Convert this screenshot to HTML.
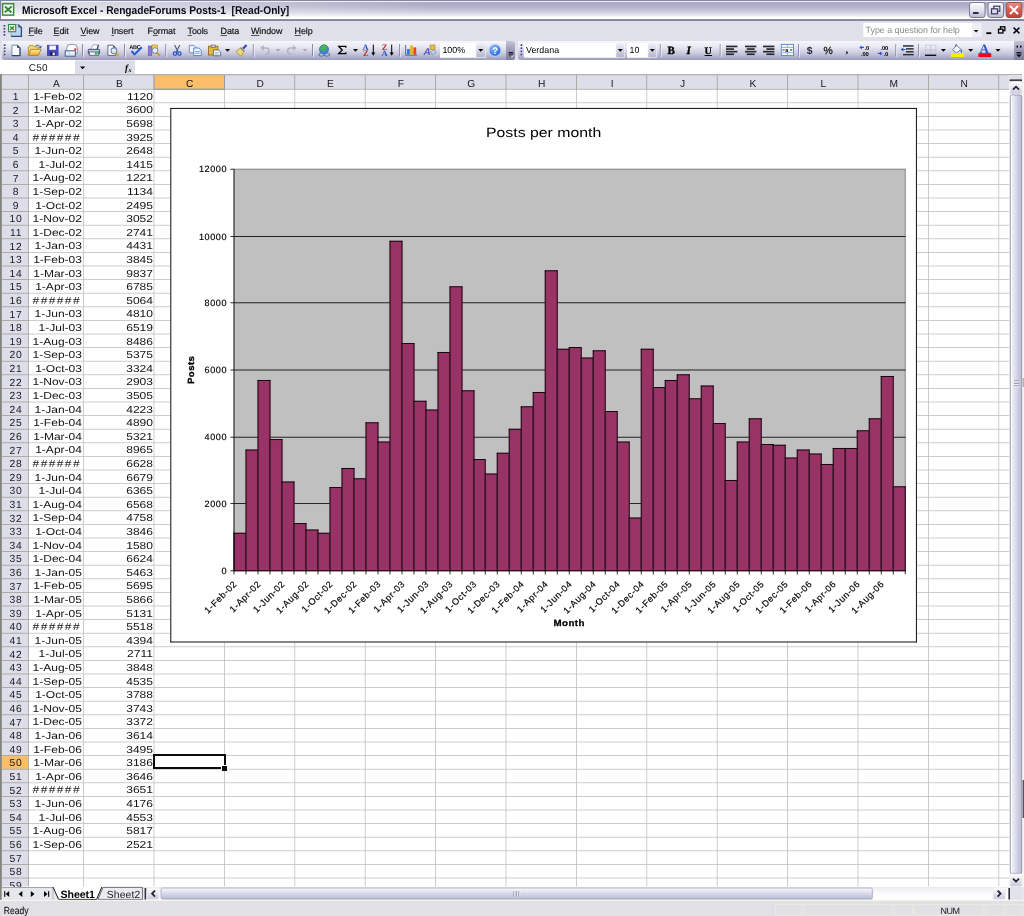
<!DOCTYPE html><html><head><meta charset="utf-8"><title>Microsoft Excel - RengadeForums Posts-1</title><style>
*{box-sizing:border-box;margin:0;padding:0}
html,body{width:1024px;height:916px;overflow:hidden;background:#fff}
body{position:relative;text-rendering:geometricPrecision;font-family:"Liberation Sans",sans-serif;font-size:9px;color:#000}
.abs{position:absolute}
#title{left:0;top:0;width:1024px;height:21px;background:linear-gradient(to bottom,#8686a4 0,#8686a4 3%,#f0f0f7 5.5%,#f0f0f7 8.5%,#a8a8c2 11%,#b0b0c9 30%,#c8c8da 52%,#e6e6ee 72%,#ffffff 83%,#ffffff 89%,#8a8aa8 93%,#8484a2 98%,#c8c8d8 100%)}
#titleshade{left:0;top:2px;width:440px;height:16px;background:linear-gradient(to right,rgba(255,255,255,.62) 0,rgba(255,255,255,.5) 30%,rgba(255,255,255,0) 100%)}
#titletxt{left:22px;top:5.4px;font-weight:bold;font-size:11.2px;letter-spacing:-.02px;transform:scaleX(.912);transform-origin:left center;white-space:nowrap;color:#0a0a14}
#menu{left:0;top:21px;width:1024px;height:19px;background:#e0e0ea}
.mi{top:25.6px;font-size:8.95px;white-space:nowrap;letter-spacing:-.08px;color:#0c0c0c;-webkit-text-stroke:.15px #0c0c0c}
.mi u{text-decoration-thickness:.7px;text-underline-offset:1px;text-decoration-color:#555}
#tb{left:0;top:40px;width:1024px;height:20.4px;background:#e0e0ea}
.tbg{top:40.6px;height:19.8px;border-radius:0 0 3px 3px;background:linear-gradient(to bottom,#f6f6fb 0,#e9e9f3 30%,#ccccdf 62%,#b0b0cb 85%,#9a9aba 100%)}
#fbar{left:0;top:60px;width:1024px;height:15px;background:#fff}
#grid{left:0;top:75px;width:1024px;height:812px}
.ch{top:77.7px;height:13px;font-size:10.2px;text-align:center;line-height:13.2px;color:#1a1a1a}
.rh{left:2px;width:26.6px;font-size:10.3px;text-align:center;letter-spacing:.8px;color:#1a1a1a;padding-top:1.35px;padding-left:1.5px}
.c{color:#141414;font-size:10.1px;letter-spacing:0;transform:scaleX(1.192);transform-origin:right center;text-align:right;white-space:nowrap;line-height:13.6px;height:13.6px}
</style></head><body><div id="w" class="abs" style="left:0;top:0;width:1024px;height:916px;will-change:transform">
<div id="title" class="abs"></div><div id="titleshade" class="abs"></div>
<div id="titletxt" class="abs">Microsoft Excel - RengadeForums Posts-1&nbsp; [Read-Only]</div>
<div id="menu" class="abs"></div>
<div class="abs mi" style="left:28.5px"><u>F</u>ile</div>
<div class="abs mi" style="left:53.5px"><u>E</u>dit</div>
<div class="abs mi" style="left:80.5px"><u>V</u>iew</div>
<div class="abs mi" style="left:111.5px"><u>I</u>nsert</div>
<div class="abs mi" style="left:147.5px">F<u>o</u>rmat</div>
<div class="abs mi" style="left:187.5px"><u>T</u>ools</div>
<div class="abs mi" style="left:220.5px"><u>D</u>ata</div>
<div class="abs mi" style="left:251px"><u>W</u>indow</div>
<div class="abs mi" style="left:294.5px"><u>H</u>elp</div>
<div id="tb" class="abs"></div>
<div class="abs tbg" style="left:2px;width:513px"></div>
<div class="abs tbg" style="left:518px;width:505px"></div>
<div id="fbar" class="abs"></div>
<svg class="abs" style="left:0;top:0" width="1024" height="916">
<rect x="28.8" y="102.40" width="980.20" height="0.80" fill="#c0c0c0"/>
<rect x="28.8" y="116.00" width="980.20" height="0.80" fill="#c0c0c0"/>
<rect x="28.8" y="129.60" width="980.20" height="0.80" fill="#c0c0c0"/>
<rect x="28.8" y="143.20" width="980.20" height="0.80" fill="#c0c0c0"/>
<rect x="28.8" y="156.80" width="980.20" height="0.80" fill="#c0c0c0"/>
<rect x="28.8" y="170.40" width="980.20" height="0.80" fill="#c0c0c0"/>
<rect x="28.8" y="184.00" width="980.20" height="0.80" fill="#c0c0c0"/>
<rect x="28.8" y="197.60" width="980.20" height="0.80" fill="#c0c0c0"/>
<rect x="28.8" y="211.20" width="980.20" height="0.80" fill="#c0c0c0"/>
<rect x="28.8" y="224.80" width="980.20" height="0.80" fill="#c0c0c0"/>
<rect x="28.8" y="238.40" width="980.20" height="0.80" fill="#c0c0c0"/>
<rect x="28.8" y="252.00" width="980.20" height="0.80" fill="#c0c0c0"/>
<rect x="28.8" y="265.60" width="980.20" height="0.80" fill="#c0c0c0"/>
<rect x="28.8" y="279.20" width="980.20" height="0.80" fill="#c0c0c0"/>
<rect x="28.8" y="292.80" width="980.20" height="0.80" fill="#c0c0c0"/>
<rect x="28.8" y="306.40" width="980.20" height="0.80" fill="#c0c0c0"/>
<rect x="28.8" y="320.00" width="980.20" height="0.80" fill="#c0c0c0"/>
<rect x="28.8" y="333.60" width="980.20" height="0.80" fill="#c0c0c0"/>
<rect x="28.8" y="347.20" width="980.20" height="0.80" fill="#c0c0c0"/>
<rect x="28.8" y="360.80" width="980.20" height="0.80" fill="#c0c0c0"/>
<rect x="28.8" y="374.40" width="980.20" height="0.80" fill="#c0c0c0"/>
<rect x="28.8" y="388.00" width="980.20" height="0.80" fill="#c0c0c0"/>
<rect x="28.8" y="401.60" width="980.20" height="0.80" fill="#c0c0c0"/>
<rect x="28.8" y="415.20" width="980.20" height="0.80" fill="#c0c0c0"/>
<rect x="28.8" y="428.80" width="980.20" height="0.80" fill="#c0c0c0"/>
<rect x="28.8" y="442.40" width="980.20" height="0.80" fill="#c0c0c0"/>
<rect x="28.8" y="456.00" width="980.20" height="0.80" fill="#c0c0c0"/>
<rect x="28.8" y="469.60" width="980.20" height="0.80" fill="#c0c0c0"/>
<rect x="28.8" y="483.20" width="980.20" height="0.80" fill="#c0c0c0"/>
<rect x="28.8" y="496.80" width="980.20" height="0.80" fill="#c0c0c0"/>
<rect x="28.8" y="510.40" width="980.20" height="0.80" fill="#c0c0c0"/>
<rect x="28.8" y="524.00" width="980.20" height="0.80" fill="#c0c0c0"/>
<rect x="28.8" y="537.60" width="980.20" height="0.80" fill="#c0c0c0"/>
<rect x="28.8" y="551.20" width="980.20" height="0.80" fill="#c0c0c0"/>
<rect x="28.8" y="564.80" width="980.20" height="0.80" fill="#c0c0c0"/>
<rect x="28.8" y="578.40" width="980.20" height="0.80" fill="#c0c0c0"/>
<rect x="28.8" y="592.00" width="980.20" height="0.80" fill="#c0c0c0"/>
<rect x="28.8" y="605.60" width="980.20" height="0.80" fill="#c0c0c0"/>
<rect x="28.8" y="619.20" width="980.20" height="0.80" fill="#c0c0c0"/>
<rect x="28.8" y="632.80" width="980.20" height="0.80" fill="#c0c0c0"/>
<rect x="28.8" y="646.40" width="980.20" height="0.80" fill="#c0c0c0"/>
<rect x="28.8" y="660.00" width="980.20" height="0.80" fill="#c0c0c0"/>
<rect x="28.8" y="673.60" width="980.20" height="0.80" fill="#c0c0c0"/>
<rect x="28.8" y="687.20" width="980.20" height="0.80" fill="#c0c0c0"/>
<rect x="28.8" y="700.80" width="980.20" height="0.80" fill="#c0c0c0"/>
<rect x="28.8" y="714.40" width="980.20" height="0.80" fill="#c0c0c0"/>
<rect x="28.8" y="728.00" width="980.20" height="0.80" fill="#c0c0c0"/>
<rect x="28.8" y="741.60" width="980.20" height="0.80" fill="#c0c0c0"/>
<rect x="28.8" y="755.20" width="980.20" height="0.80" fill="#c0c0c0"/>
<rect x="28.8" y="768.80" width="980.20" height="0.80" fill="#c0c0c0"/>
<rect x="28.8" y="782.40" width="980.20" height="0.80" fill="#c0c0c0"/>
<rect x="28.8" y="796.00" width="980.20" height="0.80" fill="#c0c0c0"/>
<rect x="28.8" y="809.60" width="980.20" height="0.80" fill="#c0c0c0"/>
<rect x="28.8" y="823.20" width="980.20" height="0.80" fill="#c0c0c0"/>
<rect x="28.8" y="836.80" width="980.20" height="0.80" fill="#c0c0c0"/>
<rect x="28.8" y="850.40" width="980.20" height="0.80" fill="#c0c0c0"/>
<rect x="28.8" y="864.00" width="980.20" height="0.80" fill="#c0c0c0"/>
<rect x="28.8" y="877.60" width="980.20" height="0.80" fill="#c0c0c0"/>
<rect x="83.20" y="89.6" width="0.80" height="796.90" fill="#c0c0c0"/>
<rect x="153.60" y="89.6" width="0.80" height="796.90" fill="#c0c0c0"/>
<rect x="224.00" y="89.6" width="0.80" height="796.90" fill="#c0c0c0"/>
<rect x="294.40" y="89.6" width="0.80" height="796.90" fill="#c0c0c0"/>
<rect x="364.80" y="89.6" width="0.80" height="796.90" fill="#c0c0c0"/>
<rect x="435.20" y="89.6" width="0.80" height="796.90" fill="#c0c0c0"/>
<rect x="505.60" y="89.6" width="0.80" height="796.90" fill="#c0c0c0"/>
<rect x="576.00" y="89.6" width="0.80" height="796.90" fill="#c0c0c0"/>
<rect x="646.40" y="89.6" width="0.80" height="796.90" fill="#c0c0c0"/>
<rect x="716.80" y="89.6" width="0.80" height="796.90" fill="#c0c0c0"/>
<rect x="787.20" y="89.6" width="0.80" height="796.90" fill="#c0c0c0"/>
<rect x="857.60" y="89.6" width="0.80" height="796.90" fill="#c0c0c0"/>
<rect x="928.00" y="89.6" width="0.80" height="796.90" fill="#c0c0c0"/>
<rect x="998.40" y="89.6" width="0.80" height="796.90" fill="#c0c0c0"/>
<rect x="0" y="74.4" width="1.7" height="813" fill="#84847e"/>
<rect x="1.7" y="75.2" width="1007.30" height="13.6" fill="#dedeeb"/>
<rect x="1.7" y="88.8" width="26.3" height="797.70" fill="#dedeeb"/>
<rect x="154.40" y="75.2" width="69.60" height="13.6" fill="#fabd68"/>
<rect x="1.7" y="756.00" width="26.3" height="12.80" fill="#fabd68"/>
<rect x="0" y="74.40" width="1022.00" height="0.80" fill="#84847e"/>
<rect x="1.7" y="88.80" width="1007.30" height="0.80" fill="#a09f90"/>
<rect x="153.60" y="88.80" width="71.20" height="0.80" fill="#7884b4"/>
<rect x="28.00" y="75.2" width="0.80" height="14.4" fill="#a09f90"/>
<rect x="83.20" y="75.2" width="0.80" height="14.4" fill="#a09f90"/>
<rect x="153.60" y="75.2" width="0.80" height="14.4" fill="#a09f90"/>
<rect x="224.00" y="75.2" width="0.80" height="14.4" fill="#a09f90"/>
<rect x="294.40" y="75.2" width="0.80" height="14.4" fill="#a09f90"/>
<rect x="364.80" y="75.2" width="0.80" height="14.4" fill="#a09f90"/>
<rect x="435.20" y="75.2" width="0.80" height="14.4" fill="#a09f90"/>
<rect x="505.60" y="75.2" width="0.80" height="14.4" fill="#a09f90"/>
<rect x="576.00" y="75.2" width="0.80" height="14.4" fill="#a09f90"/>
<rect x="646.40" y="75.2" width="0.80" height="14.4" fill="#a09f90"/>
<rect x="716.80" y="75.2" width="0.80" height="14.4" fill="#a09f90"/>
<rect x="787.20" y="75.2" width="0.80" height="14.4" fill="#a09f90"/>
<rect x="857.60" y="75.2" width="0.80" height="14.4" fill="#a09f90"/>
<rect x="928.00" y="75.2" width="0.80" height="14.4" fill="#a09f90"/>
<rect x="998.40" y="75.2" width="0.80" height="14.4" fill="#a09f90"/>
<rect x="153.60" y="75.2" width="0.80" height="13.6" fill="#7884b4" opacity=".55"/>
<rect x="224.00" y="75.2" width="0.80" height="13.6" fill="#7884b4" opacity=".55"/>
<rect x="28.00" y="89" width="0.80" height="797.50" fill="#a09f90"/>
<rect x="1.7" y="102.40" width="27" height="0.80" fill="#a09f90"/>
<rect x="1.7" y="116.00" width="27" height="0.80" fill="#a09f90"/>
<rect x="1.7" y="129.60" width="27" height="0.80" fill="#a09f90"/>
<rect x="1.7" y="143.20" width="27" height="0.80" fill="#a09f90"/>
<rect x="1.7" y="156.80" width="27" height="0.80" fill="#a09f90"/>
<rect x="1.7" y="170.40" width="27" height="0.80" fill="#a09f90"/>
<rect x="1.7" y="184.00" width="27" height="0.80" fill="#a09f90"/>
<rect x="1.7" y="197.60" width="27" height="0.80" fill="#a09f90"/>
<rect x="1.7" y="211.20" width="27" height="0.80" fill="#a09f90"/>
<rect x="1.7" y="224.80" width="27" height="0.80" fill="#a09f90"/>
<rect x="1.7" y="238.40" width="27" height="0.80" fill="#a09f90"/>
<rect x="1.7" y="252.00" width="27" height="0.80" fill="#a09f90"/>
<rect x="1.7" y="265.60" width="27" height="0.80" fill="#a09f90"/>
<rect x="1.7" y="279.20" width="27" height="0.80" fill="#a09f90"/>
<rect x="1.7" y="292.80" width="27" height="0.80" fill="#a09f90"/>
<rect x="1.7" y="306.40" width="27" height="0.80" fill="#a09f90"/>
<rect x="1.7" y="320.00" width="27" height="0.80" fill="#a09f90"/>
<rect x="1.7" y="333.60" width="27" height="0.80" fill="#a09f90"/>
<rect x="1.7" y="347.20" width="27" height="0.80" fill="#a09f90"/>
<rect x="1.7" y="360.80" width="27" height="0.80" fill="#a09f90"/>
<rect x="1.7" y="374.40" width="27" height="0.80" fill="#a09f90"/>
<rect x="1.7" y="388.00" width="27" height="0.80" fill="#a09f90"/>
<rect x="1.7" y="401.60" width="27" height="0.80" fill="#a09f90"/>
<rect x="1.7" y="415.20" width="27" height="0.80" fill="#a09f90"/>
<rect x="1.7" y="428.80" width="27" height="0.80" fill="#a09f90"/>
<rect x="1.7" y="442.40" width="27" height="0.80" fill="#a09f90"/>
<rect x="1.7" y="456.00" width="27" height="0.80" fill="#a09f90"/>
<rect x="1.7" y="469.60" width="27" height="0.80" fill="#a09f90"/>
<rect x="1.7" y="483.20" width="27" height="0.80" fill="#a09f90"/>
<rect x="1.7" y="496.80" width="27" height="0.80" fill="#a09f90"/>
<rect x="1.7" y="510.40" width="27" height="0.80" fill="#a09f90"/>
<rect x="1.7" y="524.00" width="27" height="0.80" fill="#a09f90"/>
<rect x="1.7" y="537.60" width="27" height="0.80" fill="#a09f90"/>
<rect x="1.7" y="551.20" width="27" height="0.80" fill="#a09f90"/>
<rect x="1.7" y="564.80" width="27" height="0.80" fill="#a09f90"/>
<rect x="1.7" y="578.40" width="27" height="0.80" fill="#a09f90"/>
<rect x="1.7" y="592.00" width="27" height="0.80" fill="#a09f90"/>
<rect x="1.7" y="605.60" width="27" height="0.80" fill="#a09f90"/>
<rect x="1.7" y="619.20" width="27" height="0.80" fill="#a09f90"/>
<rect x="1.7" y="632.80" width="27" height="0.80" fill="#a09f90"/>
<rect x="1.7" y="646.40" width="27" height="0.80" fill="#a09f90"/>
<rect x="1.7" y="660.00" width="27" height="0.80" fill="#a09f90"/>
<rect x="1.7" y="673.60" width="27" height="0.80" fill="#a09f90"/>
<rect x="1.7" y="687.20" width="27" height="0.80" fill="#a09f90"/>
<rect x="1.7" y="700.80" width="27" height="0.80" fill="#a09f90"/>
<rect x="1.7" y="714.40" width="27" height="0.80" fill="#a09f90"/>
<rect x="1.7" y="728.00" width="27" height="0.80" fill="#a09f90"/>
<rect x="1.7" y="741.60" width="27" height="0.80" fill="#a09f90"/>
<rect x="1.7" y="755.20" width="27" height="0.80" fill="#a09f90"/>
<rect x="1.7" y="768.80" width="27" height="0.80" fill="#a09f90"/>
<rect x="1.7" y="782.40" width="27" height="0.80" fill="#a09f90"/>
<rect x="1.7" y="796.00" width="27" height="0.80" fill="#a09f90"/>
<rect x="1.7" y="809.60" width="27" height="0.80" fill="#a09f90"/>
<rect x="1.7" y="823.20" width="27" height="0.80" fill="#a09f90"/>
<rect x="1.7" y="836.80" width="27" height="0.80" fill="#a09f90"/>
<rect x="1.7" y="850.40" width="27" height="0.80" fill="#a09f90"/>
<rect x="1.7" y="864.00" width="27" height="0.80" fill="#a09f90"/>
<rect x="1.7" y="877.60" width="27" height="0.80" fill="#a09f90"/>
</svg>
<div class="abs ch" style="left:28.90px;width:55.20px">A</div>
<div class="abs ch" style="left:84.10px;width:70.40px">B</div>
<div class="abs ch" style="left:154.50px;width:70.40px">C</div>
<div class="abs ch" style="left:224.90px;width:70.40px">D</div>
<div class="abs ch" style="left:295.30px;width:70.40px">E</div>
<div class="abs ch" style="left:365.70px;width:70.40px">F</div>
<div class="abs ch" style="left:436.10px;width:70.40px">G</div>
<div class="abs ch" style="left:506.50px;width:70.40px">H</div>
<div class="abs ch" style="left:576.90px;width:70.40px">I</div>
<div class="abs ch" style="left:647.30px;width:70.40px">J</div>
<div class="abs ch" style="left:717.70px;width:70.40px">K</div>
<div class="abs ch" style="left:788.10px;width:70.40px">L</div>
<div class="abs ch" style="left:858.50px;width:70.40px">M</div>
<div class="abs ch" style="left:928.90px;width:70.40px">N</div>
<div class="abs rh" style="top:89.70px;height:13.60px;line-height:13.60px;overflow:hidden">1</div>
<div class="abs rh" style="top:103.30px;height:13.60px;line-height:13.60px;overflow:hidden">2</div>
<div class="abs rh" style="top:116.90px;height:13.60px;line-height:13.60px;overflow:hidden">3</div>
<div class="abs rh" style="top:130.50px;height:13.60px;line-height:13.60px;overflow:hidden">4</div>
<div class="abs rh" style="top:144.10px;height:13.60px;line-height:13.60px;overflow:hidden">5</div>
<div class="abs rh" style="top:157.70px;height:13.60px;line-height:13.60px;overflow:hidden">6</div>
<div class="abs rh" style="top:171.30px;height:13.60px;line-height:13.60px;overflow:hidden">7</div>
<div class="abs rh" style="top:184.90px;height:13.60px;line-height:13.60px;overflow:hidden">8</div>
<div class="abs rh" style="top:198.50px;height:13.60px;line-height:13.60px;overflow:hidden">9</div>
<div class="abs rh" style="top:212.10px;height:13.60px;line-height:13.60px;overflow:hidden">10</div>
<div class="abs rh" style="top:225.70px;height:13.60px;line-height:13.60px;overflow:hidden">11</div>
<div class="abs rh" style="top:239.30px;height:13.60px;line-height:13.60px;overflow:hidden">12</div>
<div class="abs rh" style="top:252.90px;height:13.60px;line-height:13.60px;overflow:hidden">13</div>
<div class="abs rh" style="top:266.50px;height:13.60px;line-height:13.60px;overflow:hidden">14</div>
<div class="abs rh" style="top:280.10px;height:13.60px;line-height:13.60px;overflow:hidden">15</div>
<div class="abs rh" style="top:293.70px;height:13.60px;line-height:13.60px;overflow:hidden">16</div>
<div class="abs rh" style="top:307.30px;height:13.60px;line-height:13.60px;overflow:hidden">17</div>
<div class="abs rh" style="top:320.90px;height:13.60px;line-height:13.60px;overflow:hidden">18</div>
<div class="abs rh" style="top:334.50px;height:13.60px;line-height:13.60px;overflow:hidden">19</div>
<div class="abs rh" style="top:348.10px;height:13.60px;line-height:13.60px;overflow:hidden">20</div>
<div class="abs rh" style="top:361.70px;height:13.60px;line-height:13.60px;overflow:hidden">21</div>
<div class="abs rh" style="top:375.30px;height:13.60px;line-height:13.60px;overflow:hidden">22</div>
<div class="abs rh" style="top:388.90px;height:13.60px;line-height:13.60px;overflow:hidden">23</div>
<div class="abs rh" style="top:402.50px;height:13.60px;line-height:13.60px;overflow:hidden">24</div>
<div class="abs rh" style="top:416.10px;height:13.60px;line-height:13.60px;overflow:hidden">25</div>
<div class="abs rh" style="top:429.70px;height:13.60px;line-height:13.60px;overflow:hidden">26</div>
<div class="abs rh" style="top:443.30px;height:13.60px;line-height:13.60px;overflow:hidden">27</div>
<div class="abs rh" style="top:456.90px;height:13.60px;line-height:13.60px;overflow:hidden">28</div>
<div class="abs rh" style="top:470.50px;height:13.60px;line-height:13.60px;overflow:hidden">29</div>
<div class="abs rh" style="top:484.10px;height:13.60px;line-height:13.60px;overflow:hidden">30</div>
<div class="abs rh" style="top:497.70px;height:13.60px;line-height:13.60px;overflow:hidden">31</div>
<div class="abs rh" style="top:511.30px;height:13.60px;line-height:13.60px;overflow:hidden">32</div>
<div class="abs rh" style="top:524.90px;height:13.60px;line-height:13.60px;overflow:hidden">33</div>
<div class="abs rh" style="top:538.50px;height:13.60px;line-height:13.60px;overflow:hidden">34</div>
<div class="abs rh" style="top:552.10px;height:13.60px;line-height:13.60px;overflow:hidden">35</div>
<div class="abs rh" style="top:565.70px;height:13.60px;line-height:13.60px;overflow:hidden">36</div>
<div class="abs rh" style="top:579.30px;height:13.60px;line-height:13.60px;overflow:hidden">37</div>
<div class="abs rh" style="top:592.90px;height:13.60px;line-height:13.60px;overflow:hidden">38</div>
<div class="abs rh" style="top:606.50px;height:13.60px;line-height:13.60px;overflow:hidden">39</div>
<div class="abs rh" style="top:620.10px;height:13.60px;line-height:13.60px;overflow:hidden">40</div>
<div class="abs rh" style="top:633.70px;height:13.60px;line-height:13.60px;overflow:hidden">41</div>
<div class="abs rh" style="top:647.30px;height:13.60px;line-height:13.60px;overflow:hidden">42</div>
<div class="abs rh" style="top:660.90px;height:13.60px;line-height:13.60px;overflow:hidden">43</div>
<div class="abs rh" style="top:674.50px;height:13.60px;line-height:13.60px;overflow:hidden">44</div>
<div class="abs rh" style="top:688.10px;height:13.60px;line-height:13.60px;overflow:hidden">45</div>
<div class="abs rh" style="top:701.70px;height:13.60px;line-height:13.60px;overflow:hidden">46</div>
<div class="abs rh" style="top:715.30px;height:13.60px;line-height:13.60px;overflow:hidden">47</div>
<div class="abs rh" style="top:728.90px;height:13.60px;line-height:13.60px;overflow:hidden">48</div>
<div class="abs rh" style="top:742.50px;height:13.60px;line-height:13.60px;overflow:hidden">49</div>
<div class="abs rh" style="top:756.10px;height:13.60px;line-height:13.60px;overflow:hidden">50</div>
<div class="abs rh" style="top:769.70px;height:13.60px;line-height:13.60px;overflow:hidden">51</div>
<div class="abs rh" style="top:783.30px;height:13.60px;line-height:13.60px;overflow:hidden">52</div>
<div class="abs rh" style="top:796.90px;height:13.60px;line-height:13.60px;overflow:hidden">53</div>
<div class="abs rh" style="top:810.50px;height:13.60px;line-height:13.60px;overflow:hidden">54</div>
<div class="abs rh" style="top:824.10px;height:13.60px;line-height:13.60px;overflow:hidden">55</div>
<div class="abs rh" style="top:837.70px;height:13.60px;line-height:13.60px;overflow:hidden">56</div>
<div class="abs rh" style="top:851.30px;height:13.60px;line-height:13.60px;overflow:hidden">57</div>
<div class="abs rh" style="top:864.90px;height:13.60px;line-height:13.60px;overflow:hidden">58</div>
<div class="abs rh" style="top:878.50px;height:8.60px;line-height:13.60px;overflow:hidden">59</div>
<div class="abs c" style="left:27.8px;top:90.80px;width:54px">1-Feb-02</div>
<div class="abs c" style="left:90px;top:90.80px;width:63px">1120</div>
<div class="abs c" style="left:27.8px;top:104.40px;width:54px">1-Mar-02</div>
<div class="abs c" style="left:90px;top:104.40px;width:63px">3600</div>
<div class="abs c" style="left:27.8px;top:118.00px;width:54px">1-Apr-02</div>
<div class="abs c" style="left:90px;top:118.00px;width:63px">5698</div>
<div class="abs c" style="left:30px;top:131.60px;width:54px;text-align:left;letter-spacing:1.15px;transform-origin:left center;padding-left:2.2px">######</div>
<div class="abs c" style="left:90px;top:131.60px;width:63px">3925</div>
<div class="abs c" style="left:27.8px;top:145.20px;width:54px">1-Jun-02</div>
<div class="abs c" style="left:90px;top:145.20px;width:63px">2648</div>
<div class="abs c" style="left:27.8px;top:158.80px;width:54px">1-Jul-02</div>
<div class="abs c" style="left:90px;top:158.80px;width:63px">1415</div>
<div class="abs c" style="left:27.8px;top:172.40px;width:54px">1-Aug-02</div>
<div class="abs c" style="left:90px;top:172.40px;width:63px">1221</div>
<div class="abs c" style="left:27.8px;top:186.00px;width:54px">1-Sep-02</div>
<div class="abs c" style="left:90px;top:186.00px;width:63px">1134</div>
<div class="abs c" style="left:27.8px;top:199.60px;width:54px">1-Oct-02</div>
<div class="abs c" style="left:90px;top:199.60px;width:63px">2495</div>
<div class="abs c" style="left:27.8px;top:213.20px;width:54px">1-Nov-02</div>
<div class="abs c" style="left:90px;top:213.20px;width:63px">3052</div>
<div class="abs c" style="left:27.8px;top:226.80px;width:54px">1-Dec-02</div>
<div class="abs c" style="left:90px;top:226.80px;width:63px">2741</div>
<div class="abs c" style="left:27.8px;top:240.40px;width:54px">1-Jan-03</div>
<div class="abs c" style="left:90px;top:240.40px;width:63px">4431</div>
<div class="abs c" style="left:27.8px;top:254.00px;width:54px">1-Feb-03</div>
<div class="abs c" style="left:90px;top:254.00px;width:63px">3845</div>
<div class="abs c" style="left:27.8px;top:267.60px;width:54px">1-Mar-03</div>
<div class="abs c" style="left:90px;top:267.60px;width:63px">9837</div>
<div class="abs c" style="left:27.8px;top:281.20px;width:54px">1-Apr-03</div>
<div class="abs c" style="left:90px;top:281.20px;width:63px">6785</div>
<div class="abs c" style="left:30px;top:294.80px;width:54px;text-align:left;letter-spacing:1.15px;transform-origin:left center;padding-left:2.2px">######</div>
<div class="abs c" style="left:90px;top:294.80px;width:63px">5064</div>
<div class="abs c" style="left:27.8px;top:308.40px;width:54px">1-Jun-03</div>
<div class="abs c" style="left:90px;top:308.40px;width:63px">4810</div>
<div class="abs c" style="left:27.8px;top:322.00px;width:54px">1-Jul-03</div>
<div class="abs c" style="left:90px;top:322.00px;width:63px">6519</div>
<div class="abs c" style="left:27.8px;top:335.60px;width:54px">1-Aug-03</div>
<div class="abs c" style="left:90px;top:335.60px;width:63px">8486</div>
<div class="abs c" style="left:27.8px;top:349.20px;width:54px">1-Sep-03</div>
<div class="abs c" style="left:90px;top:349.20px;width:63px">5375</div>
<div class="abs c" style="left:27.8px;top:362.80px;width:54px">1-Oct-03</div>
<div class="abs c" style="left:90px;top:362.80px;width:63px">3324</div>
<div class="abs c" style="left:27.8px;top:376.40px;width:54px">1-Nov-03</div>
<div class="abs c" style="left:90px;top:376.40px;width:63px">2903</div>
<div class="abs c" style="left:27.8px;top:390.00px;width:54px">1-Dec-03</div>
<div class="abs c" style="left:90px;top:390.00px;width:63px">3505</div>
<div class="abs c" style="left:27.8px;top:403.60px;width:54px">1-Jan-04</div>
<div class="abs c" style="left:90px;top:403.60px;width:63px">4223</div>
<div class="abs c" style="left:27.8px;top:417.20px;width:54px">1-Feb-04</div>
<div class="abs c" style="left:90px;top:417.20px;width:63px">4890</div>
<div class="abs c" style="left:27.8px;top:430.80px;width:54px">1-Mar-04</div>
<div class="abs c" style="left:90px;top:430.80px;width:63px">5321</div>
<div class="abs c" style="left:27.8px;top:444.40px;width:54px">1-Apr-04</div>
<div class="abs c" style="left:90px;top:444.40px;width:63px">8965</div>
<div class="abs c" style="left:30px;top:458.00px;width:54px;text-align:left;letter-spacing:1.15px;transform-origin:left center;padding-left:2.2px">######</div>
<div class="abs c" style="left:90px;top:458.00px;width:63px">6628</div>
<div class="abs c" style="left:27.8px;top:471.60px;width:54px">1-Jun-04</div>
<div class="abs c" style="left:90px;top:471.60px;width:63px">6679</div>
<div class="abs c" style="left:27.8px;top:485.20px;width:54px">1-Jul-04</div>
<div class="abs c" style="left:90px;top:485.20px;width:63px">6365</div>
<div class="abs c" style="left:27.8px;top:498.80px;width:54px">1-Aug-04</div>
<div class="abs c" style="left:90px;top:498.80px;width:63px">6568</div>
<div class="abs c" style="left:27.8px;top:512.40px;width:54px">1-Sep-04</div>
<div class="abs c" style="left:90px;top:512.40px;width:63px">4758</div>
<div class="abs c" style="left:27.8px;top:526.00px;width:54px">1-Oct-04</div>
<div class="abs c" style="left:90px;top:526.00px;width:63px">3846</div>
<div class="abs c" style="left:27.8px;top:539.60px;width:54px">1-Nov-04</div>
<div class="abs c" style="left:90px;top:539.60px;width:63px">1580</div>
<div class="abs c" style="left:27.8px;top:553.20px;width:54px">1-Dec-04</div>
<div class="abs c" style="left:90px;top:553.20px;width:63px">6624</div>
<div class="abs c" style="left:27.8px;top:566.80px;width:54px">1-Jan-05</div>
<div class="abs c" style="left:90px;top:566.80px;width:63px">5463</div>
<div class="abs c" style="left:27.8px;top:580.40px;width:54px">1-Feb-05</div>
<div class="abs c" style="left:90px;top:580.40px;width:63px">5695</div>
<div class="abs c" style="left:27.8px;top:594.00px;width:54px">1-Mar-05</div>
<div class="abs c" style="left:90px;top:594.00px;width:63px">5866</div>
<div class="abs c" style="left:27.8px;top:607.60px;width:54px">1-Apr-05</div>
<div class="abs c" style="left:90px;top:607.60px;width:63px">5131</div>
<div class="abs c" style="left:30px;top:621.20px;width:54px;text-align:left;letter-spacing:1.15px;transform-origin:left center;padding-left:2.2px">######</div>
<div class="abs c" style="left:90px;top:621.20px;width:63px">5518</div>
<div class="abs c" style="left:27.8px;top:634.80px;width:54px">1-Jun-05</div>
<div class="abs c" style="left:90px;top:634.80px;width:63px">4394</div>
<div class="abs c" style="left:27.8px;top:648.40px;width:54px">1-Jul-05</div>
<div class="abs c" style="left:90px;top:648.40px;width:63px">2711</div>
<div class="abs c" style="left:27.8px;top:662.00px;width:54px">1-Aug-05</div>
<div class="abs c" style="left:90px;top:662.00px;width:63px">3848</div>
<div class="abs c" style="left:27.8px;top:675.60px;width:54px">1-Sep-05</div>
<div class="abs c" style="left:90px;top:675.60px;width:63px">4535</div>
<div class="abs c" style="left:27.8px;top:689.20px;width:54px">1-Oct-05</div>
<div class="abs c" style="left:90px;top:689.20px;width:63px">3788</div>
<div class="abs c" style="left:27.8px;top:702.80px;width:54px">1-Nov-05</div>
<div class="abs c" style="left:90px;top:702.80px;width:63px">3743</div>
<div class="abs c" style="left:27.8px;top:716.40px;width:54px">1-Dec-05</div>
<div class="abs c" style="left:90px;top:716.40px;width:63px">3372</div>
<div class="abs c" style="left:27.8px;top:730.00px;width:54px">1-Jan-06</div>
<div class="abs c" style="left:90px;top:730.00px;width:63px">3614</div>
<div class="abs c" style="left:27.8px;top:743.60px;width:54px">1-Feb-06</div>
<div class="abs c" style="left:90px;top:743.60px;width:63px">3495</div>
<div class="abs c" style="left:27.8px;top:757.20px;width:54px">1-Mar-06</div>
<div class="abs c" style="left:90px;top:757.20px;width:63px">3186</div>
<div class="abs c" style="left:27.8px;top:770.80px;width:54px">1-Apr-06</div>
<div class="abs c" style="left:90px;top:770.80px;width:63px">3646</div>
<div class="abs c" style="left:30px;top:784.40px;width:54px;text-align:left;letter-spacing:1.15px;transform-origin:left center;padding-left:2.2px">######</div>
<div class="abs c" style="left:90px;top:784.40px;width:63px">3651</div>
<div class="abs c" style="left:27.8px;top:798.00px;width:54px">1-Jun-06</div>
<div class="abs c" style="left:90px;top:798.00px;width:63px">4176</div>
<div class="abs c" style="left:27.8px;top:811.60px;width:54px">1-Jul-06</div>
<div class="abs c" style="left:90px;top:811.60px;width:63px">4553</div>
<div class="abs c" style="left:27.8px;top:825.20px;width:54px">1-Aug-06</div>
<div class="abs c" style="left:90px;top:825.20px;width:63px">5817</div>
<div class="abs c" style="left:27.8px;top:838.80px;width:54px">1-Sep-06</div>
<div class="abs c" style="left:90px;top:838.80px;width:63px">2521</div>
<div class="abs" style="left:152.9px;top:753.7px;width:73px;height:15.7px;border:2.2px solid #0a0a0a"></div>
<div class="abs" style="left:220.9px;top:765.4px;width:5.8px;height:5.4px;background:#0a0a0a;border-left:1px solid #fff;border-top:1px solid #fff"></div>
<svg class="abs" style="left:0;top:0" width="1024" height="916" font-family="Liberation Sans, sans-serif">
<rect x="170.40" y="108.00" width="746.40" height="534.40" fill="#fff"/>
<rect x="170.40" y="107.92" width="746.40" height="0.95" fill="#000"/>
<rect x="170.40" y="641.52" width="746.40" height="0.95" fill="#000"/>
<rect x="170.33" y="108.00" width="0.95" height="534.40" fill="#000"/>
<rect x="915.92" y="108.00" width="0.95" height="534.40" fill="#000"/>
<rect x="233.60" y="168.80" width="672.00" height="402.40" fill="#c0c0c0"/>
<rect x="233.60" y="168.77" width="672.00" height="0.86" fill="#808080"/>
<rect x="904.77" y="168.80" width="0.86" height="402.40" fill="#808080"/>
<rect x="233.60" y="503.19" width="672.00" height="0.82" fill="#000"/>
<rect x="233.60" y="436.79" width="672.00" height="0.82" fill="#000"/>
<rect x="233.60" y="369.59" width="672.00" height="0.82" fill="#000"/>
<rect x="233.60" y="302.39" width="672.00" height="0.82" fill="#000"/>
<rect x="233.60" y="235.99" width="672.00" height="0.82" fill="#000"/>
<rect x="233.60" y="532.80" width="12.80" height="38.40" fill="#993366"/>
<rect x="233.60" y="532.77" width="12.80" height="0.86" fill="#000"/>
<rect x="233.57" y="532.80" width="0.86" height="38.40" fill="#000"/>
<rect x="245.57" y="532.80" width="0.86" height="38.40" fill="#000"/>
<rect x="245.60" y="449.60" width="12.80" height="121.60" fill="#993366"/>
<rect x="245.60" y="449.57" width="12.80" height="0.86" fill="#000"/>
<rect x="245.57" y="449.60" width="0.86" height="121.60" fill="#000"/>
<rect x="257.57" y="449.60" width="0.86" height="121.60" fill="#000"/>
<rect x="257.60" y="380.00" width="12.80" height="191.20" fill="#993366"/>
<rect x="257.60" y="379.97" width="12.80" height="0.86" fill="#000"/>
<rect x="257.57" y="380.00" width="0.86" height="191.20" fill="#000"/>
<rect x="269.57" y="380.00" width="0.86" height="191.20" fill="#000"/>
<rect x="269.60" y="439.20" width="12.80" height="132.00" fill="#993366"/>
<rect x="269.60" y="439.17" width="12.80" height="0.86" fill="#000"/>
<rect x="269.57" y="439.20" width="0.86" height="132.00" fill="#000"/>
<rect x="281.57" y="439.20" width="0.86" height="132.00" fill="#000"/>
<rect x="281.60" y="481.60" width="12.80" height="89.60" fill="#993366"/>
<rect x="281.60" y="481.57" width="12.80" height="0.86" fill="#000"/>
<rect x="281.57" y="481.60" width="0.86" height="89.60" fill="#000"/>
<rect x="293.57" y="481.60" width="0.86" height="89.60" fill="#000"/>
<rect x="293.60" y="523.20" width="12.80" height="48.00" fill="#993366"/>
<rect x="293.60" y="523.17" width="12.80" height="0.86" fill="#000"/>
<rect x="293.57" y="523.20" width="0.86" height="48.00" fill="#000"/>
<rect x="305.57" y="523.20" width="0.86" height="48.00" fill="#000"/>
<rect x="305.60" y="529.60" width="12.80" height="41.60" fill="#993366"/>
<rect x="305.60" y="529.57" width="12.80" height="0.86" fill="#000"/>
<rect x="305.57" y="529.60" width="0.86" height="41.60" fill="#000"/>
<rect x="317.57" y="529.60" width="0.86" height="41.60" fill="#000"/>
<rect x="317.60" y="532.80" width="12.80" height="38.40" fill="#993366"/>
<rect x="317.60" y="532.77" width="12.80" height="0.86" fill="#000"/>
<rect x="317.57" y="532.80" width="0.86" height="38.40" fill="#000"/>
<rect x="329.57" y="532.80" width="0.86" height="38.40" fill="#000"/>
<rect x="329.60" y="487.20" width="12.80" height="84.00" fill="#993366"/>
<rect x="329.60" y="487.17" width="12.80" height="0.86" fill="#000"/>
<rect x="329.57" y="487.20" width="0.86" height="84.00" fill="#000"/>
<rect x="341.57" y="487.20" width="0.86" height="84.00" fill="#000"/>
<rect x="341.60" y="468.00" width="12.80" height="103.20" fill="#993366"/>
<rect x="341.60" y="467.97" width="12.80" height="0.86" fill="#000"/>
<rect x="341.57" y="468.00" width="0.86" height="103.20" fill="#000"/>
<rect x="353.57" y="468.00" width="0.86" height="103.20" fill="#000"/>
<rect x="353.60" y="478.40" width="12.80" height="92.80" fill="#993366"/>
<rect x="353.60" y="478.37" width="12.80" height="0.86" fill="#000"/>
<rect x="353.57" y="478.40" width="0.86" height="92.80" fill="#000"/>
<rect x="365.57" y="478.40" width="0.86" height="92.80" fill="#000"/>
<rect x="365.60" y="422.40" width="12.80" height="148.80" fill="#993366"/>
<rect x="365.60" y="422.37" width="12.80" height="0.86" fill="#000"/>
<rect x="365.57" y="422.40" width="0.86" height="148.80" fill="#000"/>
<rect x="377.57" y="422.40" width="0.86" height="148.80" fill="#000"/>
<rect x="377.60" y="441.60" width="12.80" height="129.60" fill="#993366"/>
<rect x="377.60" y="441.57" width="12.80" height="0.86" fill="#000"/>
<rect x="377.57" y="441.60" width="0.86" height="129.60" fill="#000"/>
<rect x="389.57" y="441.60" width="0.86" height="129.60" fill="#000"/>
<rect x="389.60" y="240.80" width="12.80" height="330.40" fill="#993366"/>
<rect x="389.60" y="240.77" width="12.80" height="0.86" fill="#000"/>
<rect x="389.57" y="240.80" width="0.86" height="330.40" fill="#000"/>
<rect x="401.57" y="240.80" width="0.86" height="330.40" fill="#000"/>
<rect x="401.60" y="343.20" width="12.80" height="228.00" fill="#993366"/>
<rect x="401.60" y="343.17" width="12.80" height="0.86" fill="#000"/>
<rect x="401.57" y="343.20" width="0.86" height="228.00" fill="#000"/>
<rect x="413.57" y="343.20" width="0.86" height="228.00" fill="#000"/>
<rect x="413.60" y="400.80" width="12.80" height="170.40" fill="#993366"/>
<rect x="413.60" y="400.77" width="12.80" height="0.86" fill="#000"/>
<rect x="413.57" y="400.80" width="0.86" height="170.40" fill="#000"/>
<rect x="425.57" y="400.80" width="0.86" height="170.40" fill="#000"/>
<rect x="425.60" y="409.60" width="12.80" height="161.60" fill="#993366"/>
<rect x="425.60" y="409.57" width="12.80" height="0.86" fill="#000"/>
<rect x="425.57" y="409.60" width="0.86" height="161.60" fill="#000"/>
<rect x="437.57" y="409.60" width="0.86" height="161.60" fill="#000"/>
<rect x="437.60" y="352.00" width="12.80" height="219.20" fill="#993366"/>
<rect x="437.60" y="351.97" width="12.80" height="0.86" fill="#000"/>
<rect x="437.57" y="352.00" width="0.86" height="219.20" fill="#000"/>
<rect x="449.57" y="352.00" width="0.86" height="219.20" fill="#000"/>
<rect x="449.60" y="286.40" width="12.80" height="284.80" fill="#993366"/>
<rect x="449.60" y="286.37" width="12.80" height="0.86" fill="#000"/>
<rect x="449.57" y="286.40" width="0.86" height="284.80" fill="#000"/>
<rect x="461.57" y="286.40" width="0.86" height="284.80" fill="#000"/>
<rect x="461.60" y="390.40" width="12.80" height="180.80" fill="#993366"/>
<rect x="461.60" y="390.37" width="12.80" height="0.86" fill="#000"/>
<rect x="461.57" y="390.40" width="0.86" height="180.80" fill="#000"/>
<rect x="473.57" y="390.40" width="0.86" height="180.80" fill="#000"/>
<rect x="473.60" y="459.20" width="12.00" height="112.00" fill="#993366"/>
<rect x="473.60" y="459.17" width="12.00" height="0.86" fill="#000"/>
<rect x="473.57" y="459.20" width="0.86" height="112.00" fill="#000"/>
<rect x="484.77" y="459.20" width="0.86" height="112.00" fill="#000"/>
<rect x="484.80" y="473.60" width="12.80" height="97.60" fill="#993366"/>
<rect x="484.80" y="473.57" width="12.80" height="0.86" fill="#000"/>
<rect x="484.77" y="473.60" width="0.86" height="97.60" fill="#000"/>
<rect x="496.77" y="473.60" width="0.86" height="97.60" fill="#000"/>
<rect x="496.80" y="452.80" width="12.80" height="118.40" fill="#993366"/>
<rect x="496.80" y="452.77" width="12.80" height="0.86" fill="#000"/>
<rect x="496.77" y="452.80" width="0.86" height="118.40" fill="#000"/>
<rect x="508.77" y="452.80" width="0.86" height="118.40" fill="#000"/>
<rect x="508.80" y="428.80" width="12.80" height="142.40" fill="#993366"/>
<rect x="508.80" y="428.77" width="12.80" height="0.86" fill="#000"/>
<rect x="508.77" y="428.80" width="0.86" height="142.40" fill="#000"/>
<rect x="520.77" y="428.80" width="0.86" height="142.40" fill="#000"/>
<rect x="520.80" y="406.40" width="12.80" height="164.80" fill="#993366"/>
<rect x="520.80" y="406.37" width="12.80" height="0.86" fill="#000"/>
<rect x="520.77" y="406.40" width="0.86" height="164.80" fill="#000"/>
<rect x="532.77" y="406.40" width="0.86" height="164.80" fill="#000"/>
<rect x="532.80" y="392.00" width="12.80" height="179.20" fill="#993366"/>
<rect x="532.80" y="391.97" width="12.80" height="0.86" fill="#000"/>
<rect x="532.77" y="392.00" width="0.86" height="179.20" fill="#000"/>
<rect x="544.77" y="392.00" width="0.86" height="179.20" fill="#000"/>
<rect x="544.80" y="270.40" width="12.80" height="300.80" fill="#993366"/>
<rect x="544.80" y="270.37" width="12.80" height="0.86" fill="#000"/>
<rect x="544.77" y="270.40" width="0.86" height="300.80" fill="#000"/>
<rect x="556.77" y="270.40" width="0.86" height="300.80" fill="#000"/>
<rect x="556.80" y="348.80" width="12.80" height="222.40" fill="#993366"/>
<rect x="556.80" y="348.77" width="12.80" height="0.86" fill="#000"/>
<rect x="556.77" y="348.80" width="0.86" height="222.40" fill="#000"/>
<rect x="568.77" y="348.80" width="0.86" height="222.40" fill="#000"/>
<rect x="568.80" y="347.20" width="12.80" height="224.00" fill="#993366"/>
<rect x="568.80" y="347.17" width="12.80" height="0.86" fill="#000"/>
<rect x="568.77" y="347.20" width="0.86" height="224.00" fill="#000"/>
<rect x="580.77" y="347.20" width="0.86" height="224.00" fill="#000"/>
<rect x="580.80" y="357.60" width="12.80" height="213.60" fill="#993366"/>
<rect x="580.80" y="357.57" width="12.80" height="0.86" fill="#000"/>
<rect x="580.77" y="357.60" width="0.86" height="213.60" fill="#000"/>
<rect x="592.77" y="357.60" width="0.86" height="213.60" fill="#000"/>
<rect x="592.80" y="350.40" width="12.80" height="220.80" fill="#993366"/>
<rect x="592.80" y="350.37" width="12.80" height="0.86" fill="#000"/>
<rect x="592.77" y="350.40" width="0.86" height="220.80" fill="#000"/>
<rect x="604.77" y="350.40" width="0.86" height="220.80" fill="#000"/>
<rect x="604.80" y="411.20" width="12.80" height="160.00" fill="#993366"/>
<rect x="604.80" y="411.17" width="12.80" height="0.86" fill="#000"/>
<rect x="604.77" y="411.20" width="0.86" height="160.00" fill="#000"/>
<rect x="616.77" y="411.20" width="0.86" height="160.00" fill="#000"/>
<rect x="616.80" y="441.60" width="12.80" height="129.60" fill="#993366"/>
<rect x="616.80" y="441.57" width="12.80" height="0.86" fill="#000"/>
<rect x="616.77" y="441.60" width="0.86" height="129.60" fill="#000"/>
<rect x="628.77" y="441.60" width="0.86" height="129.60" fill="#000"/>
<rect x="628.80" y="517.60" width="12.80" height="53.60" fill="#993366"/>
<rect x="628.80" y="517.57" width="12.80" height="0.86" fill="#000"/>
<rect x="628.77" y="517.60" width="0.86" height="53.60" fill="#000"/>
<rect x="640.77" y="517.60" width="0.86" height="53.60" fill="#000"/>
<rect x="640.80" y="348.80" width="12.80" height="222.40" fill="#993366"/>
<rect x="640.80" y="348.77" width="12.80" height="0.86" fill="#000"/>
<rect x="640.77" y="348.80" width="0.86" height="222.40" fill="#000"/>
<rect x="652.77" y="348.80" width="0.86" height="222.40" fill="#000"/>
<rect x="652.80" y="387.20" width="12.80" height="184.00" fill="#993366"/>
<rect x="652.80" y="387.17" width="12.80" height="0.86" fill="#000"/>
<rect x="652.77" y="387.20" width="0.86" height="184.00" fill="#000"/>
<rect x="664.77" y="387.20" width="0.86" height="184.00" fill="#000"/>
<rect x="664.80" y="380.00" width="12.80" height="191.20" fill="#993366"/>
<rect x="664.80" y="379.97" width="12.80" height="0.86" fill="#000"/>
<rect x="664.77" y="380.00" width="0.86" height="191.20" fill="#000"/>
<rect x="676.77" y="380.00" width="0.86" height="191.20" fill="#000"/>
<rect x="676.80" y="374.40" width="12.80" height="196.80" fill="#993366"/>
<rect x="676.80" y="374.37" width="12.80" height="0.86" fill="#000"/>
<rect x="676.77" y="374.40" width="0.86" height="196.80" fill="#000"/>
<rect x="688.77" y="374.40" width="0.86" height="196.80" fill="#000"/>
<rect x="688.80" y="398.40" width="12.80" height="172.80" fill="#993366"/>
<rect x="688.80" y="398.37" width="12.80" height="0.86" fill="#000"/>
<rect x="688.77" y="398.40" width="0.86" height="172.80" fill="#000"/>
<rect x="700.77" y="398.40" width="0.86" height="172.80" fill="#000"/>
<rect x="700.80" y="385.60" width="12.80" height="185.60" fill="#993366"/>
<rect x="700.80" y="385.57" width="12.80" height="0.86" fill="#000"/>
<rect x="700.77" y="385.60" width="0.86" height="185.60" fill="#000"/>
<rect x="712.77" y="385.60" width="0.86" height="185.60" fill="#000"/>
<rect x="712.80" y="423.20" width="12.80" height="148.00" fill="#993366"/>
<rect x="712.80" y="423.17" width="12.80" height="0.86" fill="#000"/>
<rect x="712.77" y="423.20" width="0.86" height="148.00" fill="#000"/>
<rect x="724.77" y="423.20" width="0.86" height="148.00" fill="#000"/>
<rect x="724.80" y="480.00" width="12.80" height="91.20" fill="#993366"/>
<rect x="724.80" y="479.97" width="12.80" height="0.86" fill="#000"/>
<rect x="724.77" y="480.00" width="0.86" height="91.20" fill="#000"/>
<rect x="736.77" y="480.00" width="0.86" height="91.20" fill="#000"/>
<rect x="736.80" y="441.60" width="12.80" height="129.60" fill="#993366"/>
<rect x="736.80" y="441.57" width="12.80" height="0.86" fill="#000"/>
<rect x="736.77" y="441.60" width="0.86" height="129.60" fill="#000"/>
<rect x="748.77" y="441.60" width="0.86" height="129.60" fill="#000"/>
<rect x="748.80" y="418.40" width="12.80" height="152.80" fill="#993366"/>
<rect x="748.80" y="418.37" width="12.80" height="0.86" fill="#000"/>
<rect x="748.77" y="418.40" width="0.86" height="152.80" fill="#000"/>
<rect x="760.77" y="418.40" width="0.86" height="152.80" fill="#000"/>
<rect x="760.80" y="444.00" width="12.80" height="127.20" fill="#993366"/>
<rect x="760.80" y="443.97" width="12.80" height="0.86" fill="#000"/>
<rect x="760.77" y="444.00" width="0.86" height="127.20" fill="#000"/>
<rect x="772.77" y="444.00" width="0.86" height="127.20" fill="#000"/>
<rect x="772.80" y="444.80" width="12.80" height="126.40" fill="#993366"/>
<rect x="772.80" y="444.77" width="12.80" height="0.86" fill="#000"/>
<rect x="772.77" y="444.80" width="0.86" height="126.40" fill="#000"/>
<rect x="784.77" y="444.80" width="0.86" height="126.40" fill="#000"/>
<rect x="784.80" y="457.60" width="12.80" height="113.60" fill="#993366"/>
<rect x="784.80" y="457.57" width="12.80" height="0.86" fill="#000"/>
<rect x="784.77" y="457.60" width="0.86" height="113.60" fill="#000"/>
<rect x="796.77" y="457.60" width="0.86" height="113.60" fill="#000"/>
<rect x="796.80" y="449.60" width="12.80" height="121.60" fill="#993366"/>
<rect x="796.80" y="449.57" width="12.80" height="0.86" fill="#000"/>
<rect x="796.77" y="449.60" width="0.86" height="121.60" fill="#000"/>
<rect x="808.77" y="449.60" width="0.86" height="121.60" fill="#000"/>
<rect x="808.80" y="453.60" width="12.80" height="117.60" fill="#993366"/>
<rect x="808.80" y="453.57" width="12.80" height="0.86" fill="#000"/>
<rect x="808.77" y="453.60" width="0.86" height="117.60" fill="#000"/>
<rect x="820.77" y="453.60" width="0.86" height="117.60" fill="#000"/>
<rect x="820.80" y="464.00" width="12.80" height="107.20" fill="#993366"/>
<rect x="820.80" y="463.97" width="12.80" height="0.86" fill="#000"/>
<rect x="820.77" y="464.00" width="0.86" height="107.20" fill="#000"/>
<rect x="832.77" y="464.00" width="0.86" height="107.20" fill="#000"/>
<rect x="832.80" y="448.00" width="12.80" height="123.20" fill="#993366"/>
<rect x="832.80" y="447.97" width="12.80" height="0.86" fill="#000"/>
<rect x="832.77" y="448.00" width="0.86" height="123.20" fill="#000"/>
<rect x="844.77" y="448.00" width="0.86" height="123.20" fill="#000"/>
<rect x="844.80" y="448.00" width="12.80" height="123.20" fill="#993366"/>
<rect x="844.80" y="447.97" width="12.80" height="0.86" fill="#000"/>
<rect x="844.77" y="448.00" width="0.86" height="123.20" fill="#000"/>
<rect x="856.77" y="448.00" width="0.86" height="123.20" fill="#000"/>
<rect x="856.80" y="430.40" width="12.80" height="140.80" fill="#993366"/>
<rect x="856.80" y="430.37" width="12.80" height="0.86" fill="#000"/>
<rect x="856.77" y="430.40" width="0.86" height="140.80" fill="#000"/>
<rect x="868.77" y="430.40" width="0.86" height="140.80" fill="#000"/>
<rect x="868.80" y="418.40" width="12.80" height="152.80" fill="#993366"/>
<rect x="868.80" y="418.37" width="12.80" height="0.86" fill="#000"/>
<rect x="868.77" y="418.40" width="0.86" height="152.80" fill="#000"/>
<rect x="880.77" y="418.40" width="0.86" height="152.80" fill="#000"/>
<rect x="880.80" y="376.00" width="12.80" height="195.20" fill="#993366"/>
<rect x="880.80" y="375.97" width="12.80" height="0.86" fill="#000"/>
<rect x="880.77" y="376.00" width="0.86" height="195.20" fill="#000"/>
<rect x="892.77" y="376.00" width="0.86" height="195.20" fill="#000"/>
<rect x="892.80" y="486.40" width="12.80" height="84.80" fill="#993366"/>
<rect x="892.80" y="486.37" width="12.80" height="0.86" fill="#000"/>
<rect x="892.77" y="486.40" width="0.86" height="84.80" fill="#000"/>
<rect x="904.77" y="486.40" width="0.86" height="84.80" fill="#000"/>
<rect x="233.55" y="168.80" width="0.90" height="402.40" fill="#000"/>
<rect x="233.60" y="570.35" width="672.00" height="0.90" fill="#000"/>
<rect x="230.40" y="570.39" width="3.20" height="0.82" fill="#000"/>
<text x="227.00" y="573.90" font-size="9.1" text-anchor="end" letter-spacing="0.55" stroke="#000" stroke-width="0.15">0</text>
<rect x="230.40" y="503.19" width="3.20" height="0.82" fill="#000"/>
<text x="227.00" y="506.70" font-size="9.1" text-anchor="end" letter-spacing="0.55" stroke="#000" stroke-width="0.15">2000</text>
<rect x="230.40" y="436.79" width="3.20" height="0.82" fill="#000"/>
<text x="227.00" y="440.30" font-size="9.1" text-anchor="end" letter-spacing="0.55" stroke="#000" stroke-width="0.15">4000</text>
<rect x="230.40" y="369.59" width="3.20" height="0.82" fill="#000"/>
<text x="227.00" y="373.10" font-size="9.1" text-anchor="end" letter-spacing="0.55" stroke="#000" stroke-width="0.15">6000</text>
<rect x="230.40" y="302.39" width="3.20" height="0.82" fill="#000"/>
<text x="227.00" y="305.90" font-size="9.1" text-anchor="end" letter-spacing="0.55" stroke="#000" stroke-width="0.15">8000</text>
<rect x="230.40" y="235.99" width="3.20" height="0.82" fill="#000"/>
<text x="227.00" y="239.50" font-size="9.1" text-anchor="end" letter-spacing="0.55" stroke="#000" stroke-width="0.15">10000</text>
<rect x="230.40" y="168.79" width="3.20" height="0.82" fill="#000"/>
<text x="227.00" y="172.30" font-size="9.1" text-anchor="end" letter-spacing="0.55" stroke="#000" stroke-width="0.15">12000</text>
<rect x="233.59" y="571.20" width="0.82" height="3.20" fill="#000"/>
<rect x="245.59" y="571.20" width="0.82" height="3.20" fill="#000"/>
<rect x="257.59" y="571.20" width="0.82" height="3.20" fill="#000"/>
<rect x="269.59" y="571.20" width="0.82" height="3.20" fill="#000"/>
<rect x="281.59" y="571.20" width="0.82" height="3.20" fill="#000"/>
<rect x="293.59" y="571.20" width="0.82" height="3.20" fill="#000"/>
<rect x="305.59" y="571.20" width="0.82" height="3.20" fill="#000"/>
<rect x="317.59" y="571.20" width="0.82" height="3.20" fill="#000"/>
<rect x="329.59" y="571.20" width="0.82" height="3.20" fill="#000"/>
<rect x="341.59" y="571.20" width="0.82" height="3.20" fill="#000"/>
<rect x="353.59" y="571.20" width="0.82" height="3.20" fill="#000"/>
<rect x="365.59" y="571.20" width="0.82" height="3.20" fill="#000"/>
<rect x="377.59" y="571.20" width="0.82" height="3.20" fill="#000"/>
<rect x="389.59" y="571.20" width="0.82" height="3.20" fill="#000"/>
<rect x="401.59" y="571.20" width="0.82" height="3.20" fill="#000"/>
<rect x="413.59" y="571.20" width="0.82" height="3.20" fill="#000"/>
<rect x="425.59" y="571.20" width="0.82" height="3.20" fill="#000"/>
<rect x="437.59" y="571.20" width="0.82" height="3.20" fill="#000"/>
<rect x="449.59" y="571.20" width="0.82" height="3.20" fill="#000"/>
<rect x="461.59" y="571.20" width="0.82" height="3.20" fill="#000"/>
<rect x="473.59" y="571.20" width="0.82" height="3.20" fill="#000"/>
<rect x="484.79" y="571.20" width="0.82" height="3.20" fill="#000"/>
<rect x="496.79" y="571.20" width="0.82" height="3.20" fill="#000"/>
<rect x="508.79" y="571.20" width="0.82" height="3.20" fill="#000"/>
<rect x="520.79" y="571.20" width="0.82" height="3.20" fill="#000"/>
<rect x="532.79" y="571.20" width="0.82" height="3.20" fill="#000"/>
<rect x="544.79" y="571.20" width="0.82" height="3.20" fill="#000"/>
<rect x="556.79" y="571.20" width="0.82" height="3.20" fill="#000"/>
<rect x="568.79" y="571.20" width="0.82" height="3.20" fill="#000"/>
<rect x="580.79" y="571.20" width="0.82" height="3.20" fill="#000"/>
<rect x="592.79" y="571.20" width="0.82" height="3.20" fill="#000"/>
<rect x="604.79" y="571.20" width="0.82" height="3.20" fill="#000"/>
<rect x="616.79" y="571.20" width="0.82" height="3.20" fill="#000"/>
<rect x="628.79" y="571.20" width="0.82" height="3.20" fill="#000"/>
<rect x="640.79" y="571.20" width="0.82" height="3.20" fill="#000"/>
<rect x="652.79" y="571.20" width="0.82" height="3.20" fill="#000"/>
<rect x="664.79" y="571.20" width="0.82" height="3.20" fill="#000"/>
<rect x="676.79" y="571.20" width="0.82" height="3.20" fill="#000"/>
<rect x="688.79" y="571.20" width="0.82" height="3.20" fill="#000"/>
<rect x="700.79" y="571.20" width="0.82" height="3.20" fill="#000"/>
<rect x="712.79" y="571.20" width="0.82" height="3.20" fill="#000"/>
<rect x="724.79" y="571.20" width="0.82" height="3.20" fill="#000"/>
<rect x="736.79" y="571.20" width="0.82" height="3.20" fill="#000"/>
<rect x="748.79" y="571.20" width="0.82" height="3.20" fill="#000"/>
<rect x="760.79" y="571.20" width="0.82" height="3.20" fill="#000"/>
<rect x="772.79" y="571.20" width="0.82" height="3.20" fill="#000"/>
<rect x="784.79" y="571.20" width="0.82" height="3.20" fill="#000"/>
<rect x="796.79" y="571.20" width="0.82" height="3.20" fill="#000"/>
<rect x="808.79" y="571.20" width="0.82" height="3.20" fill="#000"/>
<rect x="820.79" y="571.20" width="0.82" height="3.20" fill="#000"/>
<rect x="832.79" y="571.20" width="0.82" height="3.20" fill="#000"/>
<rect x="844.79" y="571.20" width="0.82" height="3.20" fill="#000"/>
<rect x="856.79" y="571.20" width="0.82" height="3.20" fill="#000"/>
<rect x="868.79" y="571.20" width="0.82" height="3.20" fill="#000"/>
<rect x="880.79" y="571.20" width="0.82" height="3.20" fill="#000"/>
<rect x="892.79" y="571.20" width="0.82" height="3.20" fill="#000"/>
<rect x="904.79" y="571.20" width="0.82" height="3.20" fill="#000"/>
<text transform="translate(237.60,584.50) rotate(-45)" font-size="9.1" text-anchor="end" letter-spacing="0.6" stroke="#000" stroke-width="0.18">1-Feb-02</text>
<text transform="translate(261.60,584.50) rotate(-45)" font-size="9.1" text-anchor="end" letter-spacing="0.6" stroke="#000" stroke-width="0.18">1-Apr-02</text>
<text transform="translate(285.60,584.50) rotate(-45)" font-size="9.1" text-anchor="end" letter-spacing="0.6" stroke="#000" stroke-width="0.18">1-Jun-02</text>
<text transform="translate(309.60,584.50) rotate(-45)" font-size="9.1" text-anchor="end" letter-spacing="0.6" stroke="#000" stroke-width="0.18">1-Aug-02</text>
<text transform="translate(333.60,584.50) rotate(-45)" font-size="9.1" text-anchor="end" letter-spacing="0.6" stroke="#000" stroke-width="0.18">1-Oct-02</text>
<text transform="translate(357.60,584.50) rotate(-45)" font-size="9.1" text-anchor="end" letter-spacing="0.6" stroke="#000" stroke-width="0.18">1-Dec-02</text>
<text transform="translate(381.60,584.50) rotate(-45)" font-size="9.1" text-anchor="end" letter-spacing="0.6" stroke="#000" stroke-width="0.18">1-Feb-03</text>
<text transform="translate(405.60,584.50) rotate(-45)" font-size="9.1" text-anchor="end" letter-spacing="0.6" stroke="#000" stroke-width="0.18">1-Apr-03</text>
<text transform="translate(429.60,584.50) rotate(-45)" font-size="9.1" text-anchor="end" letter-spacing="0.6" stroke="#000" stroke-width="0.18">1-Jun-03</text>
<text transform="translate(453.60,584.50) rotate(-45)" font-size="9.1" text-anchor="end" letter-spacing="0.6" stroke="#000" stroke-width="0.18">1-Aug-03</text>
<text transform="translate(477.20,584.50) rotate(-45)" font-size="9.1" text-anchor="end" letter-spacing="0.6" stroke="#000" stroke-width="0.18">1-Oct-03</text>
<text transform="translate(500.80,584.50) rotate(-45)" font-size="9.1" text-anchor="end" letter-spacing="0.6" stroke="#000" stroke-width="0.18">1-Dec-03</text>
<text transform="translate(524.80,584.50) rotate(-45)" font-size="9.1" text-anchor="end" letter-spacing="0.6" stroke="#000" stroke-width="0.18">1-Feb-04</text>
<text transform="translate(548.80,584.50) rotate(-45)" font-size="9.1" text-anchor="end" letter-spacing="0.6" stroke="#000" stroke-width="0.18">1-Apr-04</text>
<text transform="translate(572.80,584.50) rotate(-45)" font-size="9.1" text-anchor="end" letter-spacing="0.6" stroke="#000" stroke-width="0.18">1-Jun-04</text>
<text transform="translate(596.80,584.50) rotate(-45)" font-size="9.1" text-anchor="end" letter-spacing="0.6" stroke="#000" stroke-width="0.18">1-Aug-04</text>
<text transform="translate(620.80,584.50) rotate(-45)" font-size="9.1" text-anchor="end" letter-spacing="0.6" stroke="#000" stroke-width="0.18">1-Oct-04</text>
<text transform="translate(644.80,584.50) rotate(-45)" font-size="9.1" text-anchor="end" letter-spacing="0.6" stroke="#000" stroke-width="0.18">1-Dec-04</text>
<text transform="translate(668.80,584.50) rotate(-45)" font-size="9.1" text-anchor="end" letter-spacing="0.6" stroke="#000" stroke-width="0.18">1-Feb-05</text>
<text transform="translate(692.80,584.50) rotate(-45)" font-size="9.1" text-anchor="end" letter-spacing="0.6" stroke="#000" stroke-width="0.18">1-Apr-05</text>
<text transform="translate(716.80,584.50) rotate(-45)" font-size="9.1" text-anchor="end" letter-spacing="0.6" stroke="#000" stroke-width="0.18">1-Jun-05</text>
<text transform="translate(740.80,584.50) rotate(-45)" font-size="9.1" text-anchor="end" letter-spacing="0.6" stroke="#000" stroke-width="0.18">1-Aug-05</text>
<text transform="translate(764.80,584.50) rotate(-45)" font-size="9.1" text-anchor="end" letter-spacing="0.6" stroke="#000" stroke-width="0.18">1-Oct-05</text>
<text transform="translate(788.80,584.50) rotate(-45)" font-size="9.1" text-anchor="end" letter-spacing="0.6" stroke="#000" stroke-width="0.18">1-Dec-05</text>
<text transform="translate(812.80,584.50) rotate(-45)" font-size="9.1" text-anchor="end" letter-spacing="0.6" stroke="#000" stroke-width="0.18">1-Feb-06</text>
<text transform="translate(836.80,584.50) rotate(-45)" font-size="9.1" text-anchor="end" letter-spacing="0.6" stroke="#000" stroke-width="0.18">1-Apr-06</text>
<text transform="translate(860.80,584.50) rotate(-45)" font-size="9.1" text-anchor="end" letter-spacing="0.6" stroke="#000" stroke-width="0.18">1-Jun-06</text>
<text transform="translate(884.80,584.50) rotate(-45)" font-size="9.1" text-anchor="end" letter-spacing="0.6" stroke="#000" stroke-width="0.18">1-Aug-06</text>
<text transform="translate(543.6,137.1) scale(1.19,1)" font-size="13.3" text-anchor="middle">Posts per month</text>
<text transform="translate(569.2,626.2) scale(1.08,1)" font-size="9" font-weight="bold" text-anchor="middle" letter-spacing="0.45" stroke="#000" stroke-width="0.3">Month</text>
<text transform="translate(194.4,369.8) rotate(-90) scale(1.06,1)" font-size="9" font-weight="bold" text-anchor="middle" letter-spacing="0.45" stroke="#000" stroke-width="0.3">Posts</text>
</svg>
<svg class="abs" style="left:0;top:0" width="1024" height="76" font-family="Liberation Sans, sans-serif">
<defs>
<linearGradient id="btn" x1="0" y1="0" x2="0" y2="1"><stop offset="0" stop-color="#fdfdff"/><stop offset="0.5" stop-color="#e4e4f0"/><stop offset="1" stop-color="#b8b8d0"/></linearGradient>
<linearGradient id="cls" x1="0" y1="0" x2="0" y2="1"><stop offset="0" stop-color="#e8948a"/><stop offset="0.5" stop-color="#d85a50"/><stop offset="1" stop-color="#c24238"/></linearGradient>
<linearGradient id="dd" x1="0" y1="0" x2="0" y2="1"><stop offset="0" stop-color="#f0f0f8"/><stop offset="1" stop-color="#b4b4cc"/></linearGradient>
<linearGradient id="opt" x1="0" y1="0" x2="0" y2="1"><stop offset="0" stop-color="#c4c4d8"/><stop offset="0.5" stop-color="#9a9ab8"/><stop offset="1" stop-color="#7c7c9c"/></linearGradient>
<linearGradient id="fold" x1="0" y1="0" x2="0" y2="1"><stop offset="0" stop-color="#fff0a0"/><stop offset="1" stop-color="#e8a820"/></linearGradient>
<radialGradient id="hlp" cx="0.4" cy="0.35" r="0.7"><stop offset="0" stop-color="#8fc0ff"/><stop offset="1" stop-color="#1c5ad0"/></radialGradient>
</defs>
<rect x="0" y="0" width="1" height="21" fill="#8484a4"/>
<rect x="2.6" y="3.7" width="11" height="11.4" fill="#fbfdfb" stroke="#3a8a3a" stroke-width="1.5"/>
<path d="M5 6.6 L11.4 12.4 M11.6 6.4 L4.8 12.2" stroke="#2f8f38" stroke-width="2"/>
<rect x="969.5" y="2.5" width="15.5" height="15" rx="2.5" fill="url(#btn)" stroke="#7a7a98" stroke-width="1"/>
<rect x="988" y="2.5" width="15.5" height="15" rx="2.5" fill="url(#btn)" stroke="#7a7a98" stroke-width="1"/>
<rect x="1006.3" y="2.5" width="15.5" height="15" rx="2.5" fill="url(#cls)" stroke="#a04a48" stroke-width="1"/>
<rect x="973" y="12" width="5.5" height="2" fill="#2a2a44"/>
<rect x="993.8" y="6.2" width="6" height="5" fill="none" stroke="#3a3a58" stroke-width="1.2"/><rect x="991.5" y="8.8" width="6" height="5" fill="#dcdcec" stroke="#3a3a58" stroke-width="1.2"/>
<path d="M1010 6 L1018 14 M1018 6 L1010 14" stroke="#fff" stroke-width="2"/>
<rect x="4.4" y="25.9" width="1.3" height="1.3" fill="#fff" opacity=".8"/><rect x="3.6" y="25.0" width="1.7" height="1.7" fill="#3c3c84"/>
<rect x="4.4" y="28.9" width="1.3" height="1.3" fill="#fff" opacity=".8"/><rect x="3.6" y="28.0" width="1.7" height="1.7" fill="#3c3c84"/>
<rect x="4.4" y="31.9" width="1.3" height="1.3" fill="#fff" opacity=".8"/><rect x="3.6" y="31.0" width="1.7" height="1.7" fill="#3c3c84"/>
<rect x="4.4" y="34.9" width="1.3" height="1.3" fill="#fff" opacity=".8"/><rect x="3.6" y="34.0" width="1.7" height="1.7" fill="#3c3c84"/>
<path d="M11 24.6 h7.4 l3 3 v8.8 h-10.4 z" fill="#bcd6f6" stroke="#7a9acc" stroke-width="0.6"/>
<path d="M18.4 24.6 l3 3 v8.8 h-10.4" fill="none" stroke="#2a4a78" stroke-width="1.3"/>
<path d="M18.4 24.6 v3 h3 z" fill="#3a5a88"/>
<rect x="8.5" y="24.5" width="7.2" height="7.2" fill="#f8fcf8" stroke="#3a8a3a" stroke-width="1.1"/>
<path d="M10.2 26.4 L14 29.9 M14.1 26.3 L10.1 29.9" stroke="#2f8f38" stroke-width="1.4"/>
<rect x="863.3" y="23" width="109" height="14" fill="#fff"/><rect x="972.3" y="23" width="9.5" height="14" fill="#eeeef4"/>
<text x="865.6" y="33.2" font-size="8.95" fill="#8a8a8a" letter-spacing="-0.05">Type a question for help</text>
<path d="M973.8 30 h4.6 l-2.3 2.6 z" fill="#000"/>
<rect x="986.3" y="32.3" width="5" height="1.8" fill="#000"/>
<rect x="1000.5" y="26.8" width="4.4" height="3.8" fill="none" stroke="#000" stroke-width="1.3"/><rect x="998.5" y="29.2" width="4.4" height="3.8" fill="#e0e0ea" stroke="#000" stroke-width="1.3"/>
<path d="M1013.6 27.6 L1019.4 33.4 M1019.4 27.6 L1013.6 33.4" stroke="#000" stroke-width="1.5"/>
<rect x="4.7" y="45.199999999999996" width="1.3" height="1.3" fill="#fff" opacity=".8"/><rect x="3.8" y="44.3" width="1.7" height="1.7" fill="#3c3c84"/>
<rect x="4.7" y="48.3" width="1.3" height="1.3" fill="#fff" opacity=".8"/><rect x="3.8" y="47.4" width="1.7" height="1.7" fill="#3c3c84"/>
<rect x="4.7" y="51.5" width="1.3" height="1.3" fill="#fff" opacity=".8"/><rect x="3.8" y="50.6" width="1.7" height="1.7" fill="#3c3c84"/>
<rect x="4.7" y="54.699999999999996" width="1.3" height="1.3" fill="#fff" opacity=".8"/><rect x="3.8" y="53.8" width="1.7" height="1.7" fill="#3c3c84"/>
<path d="M11.9 45.2 h5.3 l2.8 2.8 v7.6 h-8.1 z" fill="#fbfcff" stroke="#6a86a8" stroke-width="0.9"/><path d="M17.2 45.2 l2.8 2.8 v7.6 h-8.1" fill="none" stroke="#28466c" stroke-width="1.1"/><path d="M17.2 45.2 v2.8 h2.8 z" fill="#3a5478"/>
<path d="M28.4 55.2 v-8.2 l1-1.4 h3.6 l1 1.2 h4 v2.2" fill="#f6d870" stroke="#b08420" stroke-width="0.8"/><path d="M28.4 55.4 l2.4-6 h10.2 l-2.6 6 z" fill="url(#fold)" stroke="#a87818" stroke-width="0.8"/>
<path d="M35.5 45.6 q3-1.6 4.8 1.2" fill="none" stroke="#4a6ab0" stroke-width="1"/><path d="M41.4 45.2 v3 h-3 z" fill="#3a5aa8"/>
<rect x="47.3" y="45.2" width="10.8" height="10.4" fill="#4848c0" stroke="#3030a0" stroke-width="0.6"/><rect x="49.3" y="45.6" width="6.6" height="4.2" fill="#f4f4fc"/><rect x="50" y="52" width="5.6" height="3.6" fill="#20205a"/><rect x="52.6" y="52.6" width="2.2" height="2.6" fill="#f0f0f8"/>
<path d="M66.8 51 v-3.2 q0-3.4 3.8-3.4 h3 q3.8 0 3.8 3.6 v5.4 h-2" fill="#fbfcff" stroke="#7686a4" stroke-width="0.9"/><rect x="65.2" y="50.8" width="10.2" height="5.4" fill="#dde4f0" stroke="#44648c" stroke-width="1"/><rect x="66.6" y="52" width="7.4" height="1.6" fill="#f6f8fc"/><rect x="68.6" y="51.4" width="1" height="4.4" fill="#b4c0d4"/><circle cx="75.3" cy="49.5" r="1.15" fill="#e82818"/>
<rect x="82.0" y="44" width="1" height="12.5" fill="#8a8aa8"/><rect x="83.0" y="44.6" width="1" height="12.5" fill="#f4f4fa" opacity=".8"/>
<path d="M90.8 49.6 l2.2-4.8 h5.4 l-1.4 4.8 z" fill="#fcfdff" stroke="#8894ac" stroke-width="0.7"/><path d="M98.5 44.9 l-1.5 4.7" stroke="#3a4a70" stroke-width="1.3"/><rect x="88.3" y="49.3" width="11.3" height="4.6" rx="0.8" fill="#c4ccde" stroke="#3c4c74" stroke-width="1"/><rect x="89.3" y="51.9" width="9.3" height="3.4" fill="#f0f3f8" stroke="#4a5a80" stroke-width="0.8"/><rect x="94.8" y="52.2" width="2.7" height="2.3" fill="#18c018"/>
<path d="M107.9 45.2 h5.3 l2.6 2.6 v7.6 h-7.9 z" fill="#fcfdff" stroke="#4a5a80" stroke-width="0.9"/><path d="M113.2 45.2 l2.6 2.6 h-2.6 z" fill="#3a4a70"/><circle cx="113.9" cy="50.8" r="2.9" fill="#dfeaf6" stroke="#7686a0" stroke-width="1.1"/><path d="M116.2 53.2 l2.1 2.3" stroke="#e09a20" stroke-width="2.1"/>
<rect x="124.0" y="44" width="1" height="12.5" fill="#8a8aa8"/><rect x="125.0" y="44.6" width="1" height="12.5" fill="#f4f4fa" opacity=".8"/>
<text x="129.3" y="48.6" font-size="5.6" font-weight="bold" letter-spacing="-0.3" fill="#111">ABC</text><path d="M131.5 51 l3 3.4 l7.4-7.2" fill="none" stroke="#2858d0" stroke-width="1.9"/>
<rect x="148.2" y="46" width="3.6" height="9.6" fill="#8a78e0" stroke="#5a4ab0" stroke-width="0.5"/><rect x="152" y="45" width="5.6" height="8" fill="#f0d060" stroke="#9a7a20" stroke-width="0.5"/><circle cx="155" cy="50.5" r="2.8" fill="#e4f0fa" stroke="#6a88a8" stroke-width="0.9"/><path d="M157 52.8 l3 3" stroke="#d89020" stroke-width="1.7"/>
<rect x="165.2" y="44" width="1" height="12.5" fill="#8a8aa8"/><rect x="166.2" y="44.6" width="1" height="12.5" fill="#f4f4fa" opacity=".8"/>
<path d="M174.6 45 l3.6 7 M179.8 45 l-3.6 7" stroke="#4a5a78" stroke-width="1.1"/><circle cx="175" cy="53.6" r="1.7" fill="none" stroke="#2858d0" stroke-width="1.3"/><circle cx="179.4" cy="53.6" r="1.7" fill="none" stroke="#2858d0" stroke-width="1.3"/>
<path d="M189.3 45.4 h4.6 l2 2 v5.4 h-6.6 z" fill="#eef4fc" stroke="#5a7ab8" stroke-width="0.8"/><path d="M193.8 48 h5 l2.4 2.4 v5.2 h-7.4 z" fill="#f6faff" stroke="#3a68c0" stroke-width="0.8"/><path d="M195.2 51.4 h4.6 M195.2 53.2 h4.6" stroke="#5a88d8" stroke-width="0.8"/>
<rect x="208.4" y="46.2" width="9.6" height="8.8" fill="#e8b838" stroke="#8a6418" stroke-width="0.8"/><rect x="211" y="45" width="4.4" height="2.4" fill="#c8c8d8" stroke="#585870" stroke-width="0.6"/><path d="M213.4 50 h5 l2.2 2 v3.8 h-7.2 z" fill="#f4f8ff" stroke="#4a5a80" stroke-width="0.8"/><path d="M214.8 52.6 h4 M214.8 54.2 h4" stroke="#8a9ab8" stroke-width="0.7"/>
<path d="M225.1 49 h5 l-2.5 2.8 z" fill="#000"/>
<path d="M243 48.6 l3.6-3.6" stroke="#3a4ab0" stroke-width="2.2"/><path d="M236 51.6 l5-4 l3.4 3.4 l-3.6 5.2 z" fill="#f0d878" stroke="#a08428" stroke-width="0.7"/><path d="M240.6 47.8 l3.6 3.6" stroke="#787890" stroke-width="1.2"/>
<rect x="252.8" y="44" width="1" height="12.5" fill="#8a8aa8"/><rect x="253.8" y="44.6" width="1" height="12.5" fill="#f4f4fa" opacity=".8"/>
<path d="M262.6 48 h3.4 q3 0 3 3 q0 3-3.4 3.6" fill="none" stroke="#b2b2c8" stroke-width="1.6"/><path d="M260 48 l3.6-3 v6 z" fill="#b2b2c8"/>
<path d="M275.5 49 h5 l-2.5 2.8 z" fill="#a8a8c0"/>
<path d="M294 48 h-3.4 q-3 0-3 3 q0 3 3.4 3.6" fill="none" stroke="#b2b2c8" stroke-width="1.6"/><path d="M296.6 48 l-3.6-3 v6 z" fill="#b2b2c8"/>
<path d="M302.5 49 h5 l-2.5 2.8 z" fill="#a8a8c0"/>
<rect x="312.0" y="44" width="1" height="12.5" fill="#8a8aa8"/><rect x="313.0" y="44.6" width="1" height="12.5" fill="#f4f4fa" opacity=".8"/>
<circle cx="324" cy="49.4" r="4.6" fill="#3a86d8" stroke="#2a5aa0" stroke-width="0.6"/><path d="M320.4 48 q1.4-4 5-3 q3 1.6 0.6 4.2 q-1.4 2.4-3.2 1.6 q-2.6-0.4-2.4-2.8" fill="#44b844"/><ellipse cx="321.6" cy="54.6" rx="2.6" ry="1.6" fill="none" stroke="#5a7ab8" stroke-width="1.1"/><ellipse cx="327" cy="54.6" rx="2.6" ry="1.6" fill="none" stroke="#5a7ab8" stroke-width="1.1"/>
<path d="M345.8 47.8 v-1.4 h-7 l3.4 3.6 l-3.4 3.6 h7 v-1.4" fill="none" stroke="#000" stroke-width="1.35"/>
<path d="M353.0 49 h5 l-2.5 2.8 z" fill="#000"/>
<text x="362.6" y="49.6" font-size="8.4" font-weight="bold" fill="#2858c8" font-family="Liberation Serif, serif">A</text><text x="363" y="56.2" font-size="8.4" font-weight="bold" fill="#b03030" font-family="Liberation Serif, serif">Z</text><path d="M373.3 44.6 v9" stroke="#000" stroke-width="1"/><path d="M371.3 52.4 h4 l-2 3.4 z" fill="#000"/>
<text x="381.8" y="49.6" font-size="8.4" font-weight="bold" fill="#b03030" font-family="Liberation Serif, serif">Z</text><text x="381.4" y="56.2" font-size="8.4" font-weight="bold" fill="#2858c8" font-family="Liberation Serif, serif">A</text><path d="M391.7 44.6 v9" stroke="#000" stroke-width="1"/><path d="M389.7 52.4 h4 l-2 3.4 z" fill="#000"/>
<rect x="399.1" y="44" width="1" height="12.5" fill="#8a8aa8"/><rect x="400.1" y="44.6" width="1" height="12.5" fill="#f4f4fa" opacity=".8"/>
<path d="M405.6 45 v10.2 h11.4" fill="none" stroke="#506088" stroke-width="0.9"/><rect x="407" y="49" width="2.8" height="5.6" fill="#3878e0"/><rect x="410.2" y="45.4" width="2.8" height="9.2" fill="#f0b020"/><rect x="413.4" y="47.4" width="2.8" height="7.2" fill="#e04828"/>
<rect x="430" y="45" width="5" height="4.6" fill="#e8c040" stroke="#907020" stroke-width="0.5"/><text x="423.4" y="54.6" font-size="10" font-weight="bold" font-style="italic" fill="#5858c8">A</text><path d="M430.4 52 l4-2.4 l1.6 2.6 l-4 2.6 z" fill="#c8d4e8" stroke="#6a7a98" stroke-width="0.6"/>
<rect x="440" y="43" width="36" height="14.7" fill="#fff"/><rect x="476" y="43" width="9.7" height="14.7" fill="url(#dd)" stroke="#f4f4fa" stroke-width="0.6"/>
<text x="442.4" y="52.9" font-size="8.9">100%</text>
<path d="M478.3 49 h5 l-2.5 2.8 z" fill="#000"/>
<circle cx="495" cy="50.4" r="6" fill="url(#hlp)" stroke="#b8d4f8" stroke-width="1.2"/><text x="492.3" y="54" font-size="9.5" font-weight="bold" fill="#fff">?</text>
<path d="M506 41 h6 q3 0 3 3 v13 q0 3-3 3 h-6 z" fill="url(#opt)"/><rect x="508.6" y="52.2" width="4.6" height="1.2" fill="#000"/><path d="M508.4 54.4 h5 l-2.5 2.8 z" fill="#000"/><path d="M509.4 55.2 h5 l-2.5 2.8 z" fill="#fff" opacity=".6"/>
<rect x="521.5" y="45.199999999999996" width="1.3" height="1.3" fill="#fff" opacity=".8"/><rect x="520.6" y="44.3" width="1.7" height="1.7" fill="#3c3c84"/>
<rect x="521.5" y="48.3" width="1.3" height="1.3" fill="#fff" opacity=".8"/><rect x="520.6" y="47.4" width="1.7" height="1.7" fill="#3c3c84"/>
<rect x="521.5" y="51.5" width="1.3" height="1.3" fill="#fff" opacity=".8"/><rect x="520.6" y="50.6" width="1.7" height="1.7" fill="#3c3c84"/>
<rect x="521.5" y="54.699999999999996" width="1.3" height="1.3" fill="#fff" opacity=".8"/><rect x="520.6" y="53.8" width="1.7" height="1.7" fill="#3c3c84"/>
<rect x="524" y="43" width="92" height="14.7" fill="#fff"/><rect x="616" y="43" width="8.6" height="14.7" fill="url(#dd)" stroke="#f4f4fa" stroke-width="0.6"/>
<text x="526" y="52.9" font-size="8.9">Verdana</text>
<path d="M617.8 49 h5 l-2.5 2.8 z" fill="#000"/>
<rect x="627" y="43" width="21" height="14.7" fill="#fff"/><rect x="648" y="43" width="8.6" height="14.7" fill="url(#dd)" stroke="#f4f4fa" stroke-width="0.6"/>
<text x="629.6" y="52.9" font-size="8.9">10</text>
<path d="M649.8 49 h5 l-2.5 2.8 z" fill="#000"/>
<rect x="659.8" y="44" width="1" height="12.5" fill="#8a8aa8"/><rect x="660.8" y="44.6" width="1" height="12.5" fill="#f4f4fa" opacity=".8"/>
<text x="667.6" y="54.4" font-size="11" font-weight="bold" font-family="Liberation Serif, serif" stroke="#000" stroke-width="0.35">B</text>
<text x="686.6" y="54.4" font-size="11" font-weight="bold" font-style="italic" font-family="Liberation Serif, serif" stroke="#000" stroke-width="0.35">I</text>
<text x="704.4" y="53.6" font-size="10" font-weight="bold" font-family="Liberation Serif, serif" stroke="#000" stroke-width="0.3">U</text><rect x="704.6" y="55" width="7.4" height="1" fill="#000"/>
<rect x="719.7" y="44" width="1" height="12.5" fill="#8a8aa8"/><rect x="720.7" y="44.6" width="1" height="12.5" fill="#f4f4fa" opacity=".8"/>
<rect x="726.0" y="45.6" width="11.4" height="1.7" fill="#2a2a32"/>
<rect x="726.0" y="48.2" width="8.0" height="1.7" fill="#2a2a32"/>
<rect x="726.0" y="50.8" width="11.4" height="1.7" fill="#2a2a32"/>
<rect x="726.0" y="53.4" width="8.0" height="1.7" fill="#2a2a32"/>
<rect x="745.0" y="45.6" width="11.4" height="1.7" fill="#2a2a32"/>
<rect x="746.7" y="48.2" width="8.0" height="1.7" fill="#2a2a32"/>
<rect x="745.0" y="50.8" width="11.4" height="1.7" fill="#2a2a32"/>
<rect x="746.7" y="53.4" width="8.0" height="1.7" fill="#2a2a32"/>
<rect x="763.0" y="45.6" width="11.4" height="1.7" fill="#2a2a32"/>
<rect x="766.4" y="48.2" width="8.0" height="1.7" fill="#2a2a32"/>
<rect x="763.0" y="50.8" width="11.4" height="1.7" fill="#2a2a32"/>
<rect x="766.4" y="53.4" width="8.0" height="1.7" fill="#2a2a32"/>
<rect x="781.3" y="44.4" width="12.2" height="11" fill="#f8fbff" stroke="#5a80c0" stroke-width="0.9"/><path d="M781.3 47.4 h12.2 M781.3 52.6 h12.2 M787.4 44.4 v3 M787.4 52.6 v2.8" stroke="#7aa0d8" stroke-width="0.8"/><text x="785.2" y="52.2" font-size="5.4" font-weight="bold">a</text><path d="M782.6 50 h2 M790.2 50 h2" stroke="#000" stroke-width="0.9"/>
<rect x="798.0" y="44" width="1" height="12.5" fill="#8a8aa8"/><rect x="799.0" y="44.6" width="1" height="12.5" fill="#f4f4fa" opacity=".8"/>
<text x="806.8" y="54" font-size="10.4" font-weight="bold" fill="#282840">$</text>
<text x="823.6" y="54" font-size="10.4" fill="#202020" stroke="#202020" stroke-width="0.3">%</text>
<text x="845.6" y="52.6" font-size="11" font-weight="bold" font-family="Liberation Serif, serif">,</text>
<text x="864.6" y="49.6" font-size="5.8" font-weight="bold" letter-spacing="-0.2">.0</text><text x="861" y="55.6" font-size="5.8" font-weight="bold" letter-spacing="-0.2">.00</text><path d="M859.2 47.4 l2.6-2 v1.3 h2.2 v1.4 h-2.2 v1.3 z" fill="#2858d0"/>
<text x="880.6" y="49.6" font-size="5.8" font-weight="bold" letter-spacing="-0.2">.00</text><text x="883.6" y="55.6" font-size="5.8" font-weight="bold" letter-spacing="-0.2">.0</text><path d="M882.6 53.4 l-2.6-2 v1.3 h-2.2 v1.4 h2.2 v1.3 z" fill="#2858d0"/>
<rect x="895.3" y="44" width="1" height="12.5" fill="#8a8aa8"/><rect x="896.3" y="44.6" width="1" height="12.5" fill="#f4f4fa" opacity=".8"/>
<rect x="903" y="45.2" width="10.6" height="1.5" fill="#303038"/>
<rect x="906" y="48.1" width="7.6" height="1.5" fill="#303038"/>
<rect x="906" y="51.0" width="7.6" height="1.5" fill="#303038"/>
<rect x="903" y="53.9" width="10.6" height="1.5" fill="#303038"/>
<path d="M900.6 49.6 l2.8-2 v4 z" fill="#2858d0"/><path d="M903 49.6 h2.6" stroke="#2858d0" stroke-width="1"/>
<rect x="918.1" y="44" width="1" height="12.5" fill="#8a8aa8"/><rect x="919.1" y="44.6" width="1" height="12.5" fill="#f4f4fa" opacity=".8"/>
<path d="M925.4 45.2 h10.4 M925.4 50 h10.4 M925.4 45.2 v9.6 M930.6 45.2 v9.6 M935.8 45.2 v9.6" stroke="#b0b0c8" stroke-width="0.9" stroke-dasharray="1 1"/><rect x="925" y="54.6" width="11.2" height="1.4" fill="#101018"/>
<path d="M940.9 49 h5 l-2.5 2.8 z" fill="#000"/>
<path d="M952.6 49.6 l4.2-4.2 l4 4 l-4.2 3.6 z" fill="#f6f8ff" stroke="#4a5a80" stroke-width="0.8"/><path d="M955.4 47 q-0.6-3 1.6-2.6" fill="none" stroke="#4a5a80" stroke-width="0.8"/><path d="M961 49 q2 2.4 0.4 4.2 q-1.6-1.4-0.4-4.2" fill="#2858d0"/><rect x="951" y="53.2" width="13" height="3.8" fill="#f8f000"/>
<path d="M968.2 49 h5 l-2.5 2.8 z" fill="#000"/>
<text x="979.6" y="52.8" font-size="13" font-weight="bold" fill="#2a58c0" font-family="Liberation Serif, serif">A</text><rect x="978.4" y="53.2" width="12.8" height="3.8" fill="#f00010"/>
<path d="M995.5 49 h5 l-2.5 2.8 z" fill="#000"/>
<path d="M1014.6 41 h9.4 v19 h-9.4 q-0.6 0-0.6-3 v-13 q0-3 0.6-3 z" fill="url(#opt)"/><rect x="1016.6" y="45.6" width="1.4" height="2" fill="#000"/><rect x="1020" y="45.6" width="1.4" height="2" fill="#000"/><rect x="1016.4" y="52.2" width="5" height="1.2" fill="#000"/><path d="M1016.2 54.4 h5.4 l-2.7 2.8 z" fill="#000"/>
<rect x="75" y="60.4" width="60" height="13.8" fill="#dddde9"/>
<text x="28.8" y="70.9" font-size="10" letter-spacing="0.2" fill="#222">C50</text>
<path d="M80 66.4 h5.2 l-2.6 2.8 z" fill="#000"/>
<text x="125" y="70.8" font-size="9.4" font-style="italic" font-weight="bold" font-family="Liberation Serif, serif">f</text><text x="128.6" y="71.6" font-size="6" font-weight="bold" font-style="italic" font-family="Liberation Serif, serif">x</text>
</svg>
<svg class="abs" style="left:0;top:0" width="1024" height="916" font-family="Liberation Sans, sans-serif">
<defs>
<linearGradient id="vth" x1="0" y1="0" x2="1" y2="0"><stop offset="0" stop-color="#f8f8fc"/><stop offset="0.45" stop-color="#dcdcec"/><stop offset="1" stop-color="#b8b8d2"/></linearGradient>
<linearGradient id="hth" x1="0" y1="0" x2="0" y2="1"><stop offset="0" stop-color="#f8f8fc"/><stop offset="0.45" stop-color="#dcdcec"/><stop offset="1" stop-color="#b8b8d2"/></linearGradient>
<linearGradient id="htr" x1="0" y1="0" x2="0" y2="1"><stop offset="0" stop-color="#ececf2"/><stop offset="0.5" stop-color="#fbfbfe"/><stop offset="1" stop-color="#ffffff"/></linearGradient>
<linearGradient id="sbt" x1="0" y1="0" x2="0" y2="1"><stop offset="0" stop-color="#ffffff"/><stop offset="1" stop-color="#c8c8dc"/></linearGradient>
</defs>
<rect x="1009.4" y="75.2" width="14.6" height="812" fill="#f2f2f8"/>
<rect x="1009.4" y="75.2" width="12.8" height="4.4" fill="#dedeeb"/>
<rect x="1022" y="75" width="2" height="826" fill="#f8f6ea"/>
<rect x="1009.6" y="79.4" width="12.4" height="2" fill="#30303c"/>
<rect x="1010" y="81.4" width="12" height="12.6" rx="1.5" fill="url(#sbt)" stroke="#eeeef6" stroke-width="0.8"/>
<path d="M1013 89.6 l3-3 l3 3" fill="none" stroke="#20202c" stroke-width="1.7"/>
<rect x="1010.3" y="95" width="11.4" height="778.4" rx="1.5" fill="url(#vth)" stroke="#8c8ca8" stroke-width="0.8"/>
<rect x="1011.2" y="95.6" width="1" height="777" fill="#fdfdff"/>
<rect x="1014" y="380.4" width="5" height="1" fill="#8c8ca6"/><rect x="1014" y="381.4" width="5" height="0.8" fill="#f6f6fc"/>
<rect x="1014" y="382.9" width="5" height="1" fill="#8c8ca6"/><rect x="1014" y="383.9" width="5" height="0.8" fill="#f6f6fc"/>
<rect x="1014" y="385.4" width="5" height="1" fill="#8c8ca6"/><rect x="1014" y="386.4" width="5" height="0.8" fill="#f6f6fc"/>
<rect x="1010" y="874" width="12" height="12.6" rx="1.5" fill="url(#sbt)" stroke="#eeeef6" stroke-width="0.8"/>
<path d="M1013 878.6 l3 3 l3 -3" fill="none" stroke="#20202c" stroke-width="1.7"/>
<rect x="1022.6" y="780" width="1.4" height="38" fill="#50505c"/>
<rect x="1022.6" y="378" width="1.4" height="9" fill="#b0b0bc"/>
<rect x="0" y="887" width="1024" height="13" fill="#e6e6ed"/>
<rect x="0" y="74.4" width="1.7" height="826" fill="#84847e"/>
<rect x="1.7" y="887" width="51.6" height="0.9" fill="#9c9c9c"/>
<rect x="52.6" y="887.6" width="0.8" height="12" fill="#a8a8ac"/>
<rect x="4.2" y="891.2" width="1.1" height="5.6" fill="#000"/><path d="M9.2 891.1 v5.8 l-3.5-2.9 z" fill="#000"/>
<path d="M22.3 891.1 v5.8 l-3.7-2.9 z" fill="#000"/>
<path d="M30.8 891.1 v5.8 l3.7-2.9 z" fill="#000"/>
<path d="M44 891.1 v5.8 l3.5-2.9 z" fill="#000"/><rect x="48.1" y="891.2" width="1.1" height="5.6" fill="#000"/>
<path d="M98 899.4 l5-12 h39.4 v12 z" fill="#ebebf2" stroke="#505058" stroke-width="0.8"/>
<path d="M53 887 l5.6 12.4 h38 l5.2-12.4 z" fill="#fff"/><path d="M53 887 l5.6 12.4 h38 l5.2-12.4" fill="none" stroke="#000" stroke-width="0.9"/>
<text x="60.5" y="897.8" font-size="10.6" font-weight="bold" letter-spacing="-0.05">Sheet1</text>
<text x="106.8" y="897.8" font-size="10.4" letter-spacing="0.1" fill="#222">Sheet2</text>
<rect x="144.6" y="888" width="1.8" height="11.6" fill="#30303c"/>
<rect x="146.6" y="887.4" width="862" height="12.4" fill="url(#htr)"/>
<rect x="147" y="887.8" width="12" height="11.6" rx="1.5" fill="url(#sbt)" stroke="#eeeef6" stroke-width="0.8"/>
<path d="M155 890.6 l-3 3 l3 3" fill="none" stroke="#20202c" stroke-width="1.7"/>
<rect x="161" y="888" width="711.4" height="11.2" rx="1.5" fill="url(#hth)" stroke="#a4a4bc" stroke-width="0.8"/>
<rect x="513.4" y="891.2" width="1" height="5" fill="#8c8ca6"/><rect x="514.4" y="891.2" width="0.8" height="5" fill="#f6f6fc"/>
<rect x="515.9" y="891.2" width="1" height="5" fill="#8c8ca6"/><rect x="516.9" y="891.2" width="0.8" height="5" fill="#f6f6fc"/>
<rect x="518.4" y="891.2" width="1" height="5" fill="#8c8ca6"/><rect x="519.4" y="891.2" width="0.8" height="5" fill="#f6f6fc"/>
<rect x="993" y="887.8" width="12.4" height="11.6" rx="1.5" fill="url(#sbt)" stroke="#eeeef6" stroke-width="0.8"/>
<path d="M997.6 890.6 l3 3 l-3 3" fill="none" stroke="#20202c" stroke-width="1.7"/>
<rect x="1006.4" y="888" width="1.4" height="11.6" fill="#fff"/><rect x="1008.4" y="888" width="1.6" height="11.6" fill="#30303c"/>
<rect x="1010" y="887" width="12" height="13" fill="#e2e2ea"/>
<rect x="0" y="900" width="1024" height="16" fill="#e1e0e5"/>
<rect x="0" y="899.8" width="1024" height="1.2" fill="#f6f5ea"/>
<text transform="translate(3.8,913.8) scale(0.83,1)" font-size="10.3" fill="#111" stroke="#111" stroke-width="0.12">Ready</text>
<text x="940.4" y="913.5" font-size="9" letter-spacing="-0.5" fill="#1a1a1a">NUM</text>
<rect x="775.5" y="904.6" width="26.0" height="10.4" fill="none" stroke="#ecebe2" stroke-width="0.9"/>
<rect x="804" y="904.6" width="88.5" height="10.4" fill="none" stroke="#ecebe2" stroke-width="0.9"/>
<rect x="894.6" y="904.6" width="18.0" height="10.4" fill="none" stroke="#ecebe2" stroke-width="0.9"/>
<rect x="914.7" y="904.6" width="68.29999999999995" height="10.4" fill="none" stroke="#ecebe2" stroke-width="0.9"/>
<rect x="985.6" y="904.6" width="18.0" height="10.4" fill="none" stroke="#ecebe2" stroke-width="0.9"/>
<rect x="1006" y="904.6" width="16.600000000000023" height="10.4" fill="none" stroke="#ecebe2" stroke-width="0.9"/>
</svg>
</div></body></html>
